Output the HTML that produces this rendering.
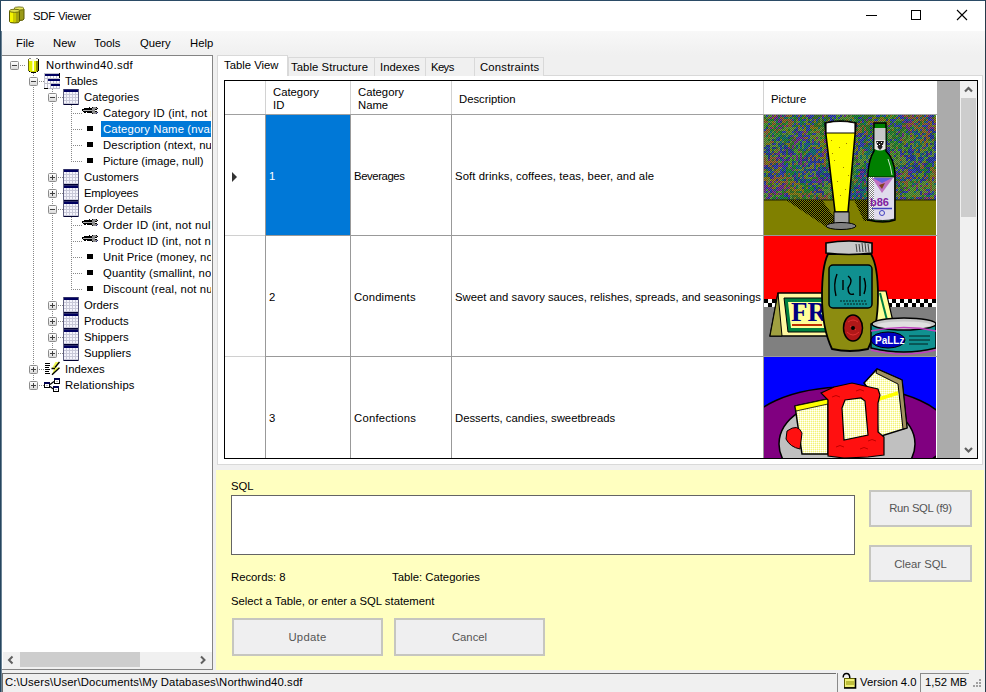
<!DOCTYPE html>
<html><head><meta charset="utf-8">
<style>
*{box-sizing:border-box;margin:0;padding:0}
html,body{width:986px;height:692px;overflow:hidden;background:#f0f0f0;font-family:"Liberation Sans",sans-serif;font-size:11.3px;color:#000}
.a{position:absolute}
.t{position:absolute;white-space:nowrap;line-height:13px}
svg{position:absolute;overflow:hidden}
</style></head><body>

<div class="a" style="left:0px;top:0px;width:986px;height:31px;background:#fff"></div>
<svg style="left:0;top:0" width="40" height="31">
<path d="M14 9 h10 v10 q0 1.5 -5 1.5 q-5 0 -5 -1.5z" fill="#9a9a18" stroke="#5a5a00" stroke-width="1"/>
<ellipse cx="19" cy="8.5" rx="5" ry="1.6" fill="#e8e860" stroke="#5a5a00" stroke-width="0.8"/>
<path d="M9.5 11 h10 v10.5 q0 1.5 -5 1.5 q-5 0 -5 -1.5z" fill="#c8c800" stroke="#5a5a00" stroke-width="1"/>
<rect x="10" y="12" width="3" height="10" fill="#f4f400"/>
<rect x="16" y="12" width="3" height="10" fill="#a0a010"/>
<ellipse cx="14.5" cy="10.8" rx="5" ry="1.6" fill="#dede50" stroke="#5a5a00" stroke-width="0.8"/>
</svg>
<div class="t" style="left:33px;top:10px;letter-spacing:-0.2px">SDF Viewer</div>
<div class="a" style="left:866px;top:15px;width:11px;height:1px;background:#000"></div>
<div class="a" style="left:911px;top:10px;width:10px;height:10px;border:1px solid #000"></div>
<svg style="left:956px;top:9px" width="12" height="12"><path d="M1 1 L11 11 M11 1 L1 11" stroke="#000" stroke-width="1.1"/></svg>
<div class="a" style="left:0px;top:31px;width:986px;height:24px;background:linear-gradient(#f8f8f8,#f0f0f0)"></div>
<div class="t" style="left:16px;top:37px;">File</div>
<div class="t" style="left:53px;top:37px;">New</div>
<div class="t" style="left:94px;top:37px;">Tools</div>
<div class="t" style="left:140px;top:37px;">Query</div>
<div class="t" style="left:190px;top:37px;">Help</div>
<div class="a" style="left:2px;top:55px;width:211px;height:615px;border:1px solid #848484;border-left:none;background:#fff"></div>
<div class="a" style="left:3px;top:56px;width:208px;height:596px;overflow:hidden">
<svg style="left:0;top:0" width="209" height="596">
<line x1="30.5" y1="17" x2="30.5" y2="330" stroke="#888" stroke-width="1" stroke-dasharray="1 1"/>
<line x1="49.5" y1="33" x2="49.5" y2="298" stroke="#888" stroke-width="1" stroke-dasharray="1 1"/>
<line x1="68.5" y1="49" x2="68.5" y2="106" stroke="#888" stroke-width="1" stroke-dasharray="1 1"/>
<line x1="68.5" y1="145" x2="68.5" y2="234" stroke="#888" stroke-width="1" stroke-dasharray="1 1"/>
<line x1="17" y1="9.5" x2="23" y2="9.5" stroke="#888" stroke-width="1" stroke-dasharray="1 1"/>
<line x1="36" y1="25.5" x2="42" y2="25.5" stroke="#888" stroke-width="1" stroke-dasharray="1 1"/>
<line x1="55" y1="41.5" x2="61" y2="41.5" stroke="#888" stroke-width="1" stroke-dasharray="1 1"/>
<line x1="70" y1="57.5" x2="80" y2="57.5" stroke="#888" stroke-width="1" stroke-dasharray="1 1"/>
<line x1="70" y1="73.5" x2="80" y2="73.5" stroke="#888" stroke-width="1" stroke-dasharray="1 1"/>
<line x1="70" y1="89.5" x2="80" y2="89.5" stroke="#888" stroke-width="1" stroke-dasharray="1 1"/>
<line x1="70" y1="105.5" x2="80" y2="105.5" stroke="#888" stroke-width="1" stroke-dasharray="1 1"/>
<line x1="55" y1="121.5" x2="61" y2="121.5" stroke="#888" stroke-width="1" stroke-dasharray="1 1"/>
<line x1="55" y1="137.5" x2="61" y2="137.5" stroke="#888" stroke-width="1" stroke-dasharray="1 1"/>
<line x1="55" y1="153.5" x2="61" y2="153.5" stroke="#888" stroke-width="1" stroke-dasharray="1 1"/>
<line x1="70" y1="169.5" x2="80" y2="169.5" stroke="#888" stroke-width="1" stroke-dasharray="1 1"/>
<line x1="70" y1="185.5" x2="80" y2="185.5" stroke="#888" stroke-width="1" stroke-dasharray="1 1"/>
<line x1="70" y1="201.5" x2="80" y2="201.5" stroke="#888" stroke-width="1" stroke-dasharray="1 1"/>
<line x1="70" y1="217.5" x2="80" y2="217.5" stroke="#888" stroke-width="1" stroke-dasharray="1 1"/>
<line x1="70" y1="233.5" x2="80" y2="233.5" stroke="#888" stroke-width="1" stroke-dasharray="1 1"/>
<line x1="55" y1="249.5" x2="61" y2="249.5" stroke="#888" stroke-width="1" stroke-dasharray="1 1"/>
<line x1="55" y1="265.5" x2="61" y2="265.5" stroke="#888" stroke-width="1" stroke-dasharray="1 1"/>
<line x1="55" y1="281.5" x2="61" y2="281.5" stroke="#888" stroke-width="1" stroke-dasharray="1 1"/>
<line x1="55" y1="297.5" x2="61" y2="297.5" stroke="#888" stroke-width="1" stroke-dasharray="1 1"/>
<line x1="36" y1="313.5" x2="42" y2="313.5" stroke="#888" stroke-width="1" stroke-dasharray="1 1"/>
<line x1="36" y1="329.5" x2="42" y2="329.5" stroke="#888" stroke-width="1" stroke-dasharray="1 1"/>
</svg>
<svg width="0" height="0"><defs><linearGradient id="eg" x1="0" y1="0" x2="0" y2="1"><stop offset="0" stop-color="#ffffff"/><stop offset="1" stop-color="#d8d8d8"/></linearGradient></defs></svg>
<svg style="left:7px;top:5px" width="9" height="9"><rect x="0.5" y="0.5" width="8" height="8" rx="1" fill="url(#eg)" stroke="#8c8c8c"/><rect x="2" y="4" width="5" height="1" fill="#404040"/></svg>
<svg style="left:25px;top:2px" width="11" height="15" shape-rendering="crispEdges"><rect x="1" y="0" width="2" height="1" fill="#8a8a8a"/><rect x="8" y="0" width="2" height="1" fill="#8a8a8a"/><rect x="1" y="1" width="9" height="2" fill="#fbfbe8"/><rect x="0" y="1" width="1" height="12" fill="#707010"/><rect x="10" y="1" width="1" height="12" fill="#000"/><rect x="1" y="3" width="3" height="10" fill="#e4f000"/><rect x="4" y="3" width="1" height="10" fill="#f8ff90"/><rect x="5" y="3" width="1" height="10" fill="#ffffe0"/><rect x="6" y="3" width="2" height="10" fill="#e8f000"/><rect x="8" y="3" width="2" height="10" fill="#8c8c00"/><rect x="1" y="13" width="1" height="1" fill="#000"/><rect x="9" y="13" width="1" height="1" fill="#000"/><rect x="2" y="13" width="7" height="1" fill="#c8d000"/><rect x="3" y="14" width="5" height="1" fill="#000"/></svg>
<div class="t" style="left:43px;top:3px;letter-spacing:0.36px">Northwind40.sdf</div>
<svg style="left:26px;top:21px" width="9" height="9"><rect x="0.5" y="0.5" width="8" height="8" rx="1" fill="url(#eg)" stroke="#8c8c8c"/><rect x="2" y="4" width="5" height="1" fill="#404040"/></svg>
<svg style="left:41px;top:17px" width="16" height="16" shape-rendering="crispEdges"><rect x="0" y="0" width="16" height="16" fill="#c0c0cc"/><rect x="1" y="1" width="15" height="2" fill="#000060"/><rect x="15" y="0" width="1" height="5" fill="#000"/><rect x="1" y="3" width="2" height="2" fill="#fafaff"/><rect x="4" y="3" width="2" height="2" fill="#fafaff"/><rect x="7" y="3" width="2" height="2" fill="#fafaff"/><rect x="10" y="3" width="2" height="2" fill="#fafaff"/><rect x="13" y="3" width="2" height="2" fill="#fafaff"/><rect x="1" y="8" width="2" height="2" fill="#fafaff"/><rect x="4" y="8" width="2" height="2" fill="#fafaff"/><rect x="7" y="8" width="2" height="2" fill="#fafaff"/><rect x="10" y="8" width="2" height="2" fill="#fafaff"/><rect x="13" y="8" width="2" height="2" fill="#fafaff"/><rect x="1" y="13" width="2" height="2" fill="#fafaff"/><rect x="4" y="13" width="2" height="2" fill="#fafaff"/><rect x="7" y="13" width="2" height="2" fill="#fafaff"/><rect x="10" y="13" width="2" height="2" fill="#fafaff"/><rect x="13" y="13" width="2" height="2" fill="#fafaff"/><rect x="4" y="6" width="12" height="2" fill="#000060"/><rect x="1" y="6" width="2" height="2" fill="#fafaff"/><rect x="7" y="11" width="9" height="2" fill="#000060"/><rect x="1" y="11" width="2" height="2" fill="#fafaff"/><rect x="4" y="11" width="2" height="2" fill="#fafaff"/><rect x="0" y="15" width="4" height="1" fill="#000"/></svg>
<div class="t" style="left:62px;top:19px;letter-spacing:0px">Tables</div>
<svg style="left:45px;top:37px" width="9" height="9"><rect x="0.5" y="0.5" width="8" height="8" rx="1" fill="url(#eg)" stroke="#8c8c8c"/><rect x="2" y="4" width="5" height="1" fill="#404040"/></svg>
<svg style="left:60px;top:33px" width="16" height="16" shape-rendering="crispEdges"><rect x="0" y="0" width="16" height="16" fill="#c8c8d8"/><rect x="0" y="0" width="16" height="1" fill="#30306a"/><rect x="0" y="1" width="16" height="2" fill="#000060"/><rect x="1" y="3" width="2" height="2" fill="#f4f4fc"/><rect x="4" y="3" width="2" height="2" fill="#f4f4fc"/><rect x="7" y="3" width="2" height="2" fill="#f4f4fc"/><rect x="10" y="3" width="2" height="2" fill="#f4f4fc"/><rect x="13" y="3" width="2" height="2" fill="#f4f4fc"/><rect x="1" y="6" width="2" height="2" fill="#f4f4fc"/><rect x="4" y="6" width="2" height="2" fill="#f4f4fc"/><rect x="7" y="6" width="2" height="2" fill="#f4f4fc"/><rect x="10" y="6" width="2" height="2" fill="#f4f4fc"/><rect x="13" y="6" width="2" height="2" fill="#f4f4fc"/><rect x="1" y="9" width="2" height="2" fill="#f4f4fc"/><rect x="4" y="9" width="2" height="2" fill="#f4f4fc"/><rect x="7" y="9" width="2" height="2" fill="#f4f4fc"/><rect x="10" y="9" width="2" height="2" fill="#f4f4fc"/><rect x="13" y="9" width="2" height="2" fill="#f4f4fc"/><rect x="1" y="12" width="2" height="2" fill="#f4f4fc"/><rect x="4" y="12" width="2" height="2" fill="#f4f4fc"/><rect x="7" y="12" width="2" height="2" fill="#f4f4fc"/><rect x="10" y="12" width="2" height="2" fill="#f4f4fc"/><rect x="13" y="12" width="2" height="2" fill="#f4f4fc"/><rect x="0" y="15" width="16" height="1" fill="#000030"/><rect x="0" y="0" width="1" height="16" fill="#606080"/><rect x="15" y="0" width="1" height="16" fill="#606080"/></svg>
<div class="t" style="left:81px;top:35px;letter-spacing:0.05px">Categories</div>
<svg style="left:79px;top:51px" width="16" height="7" shape-rendering="crispEdges"><rect x="2" y="1" width="8" height="1" fill="#000"/><rect x="7" y="0" width="1" height="1" fill="#000"/><rect x="0" y="2" width="1" height="1" fill="#000"/><rect x="1" y="2" width="9" height="1" fill="#000"/><rect x="1" y="3" width="9" height="1" fill="#b0b0b0"/><rect x="0" y="3" width="1" height="1" fill="#000"/><rect x="1" y="4" width="9" height="1" fill="#000"/><rect x="2" y="5" width="2" height="1" fill="#000"/><rect x="5" y="5" width="4" height="1" fill="#000"/><rect x="10" y="1" width="5" height="5" fill="#8c8c8c"/><rect x="11" y="0" width="3" height="1" fill="#8c8c8c"/><rect x="11" y="6" width="3" height="1" fill="#8c8c8c"/><rect x="10" y="0" width="1" height="1" fill="#000"/><rect x="14" y="0" width="1" height="1" fill="#000"/><rect x="9" y="1" width="1" height="1" fill="#000"/><rect x="15" y="1" width="1" height="1" fill="#000"/><rect x="9" y="5" width="1" height="1" fill="#000"/><rect x="15" y="5" width="1" height="1" fill="#202060"/><rect x="10" y="6" width="1" height="1" fill="#000"/><rect x="14" y="6" width="1" height="1" fill="#202060"/><rect x="13" y="2" width="2" height="1" fill="#000"/><rect x="13" y="3" width="3" height="1" fill="#fff"/><rect x="13" y="4" width="2" height="1" fill="#000"/></svg>
<div class="t" style="left:100px;top:51px;letter-spacing:0.15px">Category ID (int, not null)</div>
<div class="a" style="left:84px;top:70px;width:6px;height:5px;background:#000"></div>
<div class="a" style="left:98px;top:65px;width:115px;height:16px;background:#0078d7"></div>
<div class="t" style="left:100px;top:67px;color:#fff;letter-spacing:0.15px">Category Name (nvarchar(15), not null)</div>
<div class="a" style="left:84px;top:86px;width:6px;height:5px;background:#000"></div>
<div class="t" style="left:100px;top:83px;letter-spacing:0.1px">Description (ntext, null)</div>
<div class="a" style="left:84px;top:102px;width:6px;height:5px;background:#000"></div>
<div class="t" style="left:100px;top:99px;letter-spacing:0px">Picture (image, null)</div>
<svg style="left:45px;top:117px" width="9" height="9"><rect x="0.5" y="0.5" width="8" height="8" rx="1" fill="url(#eg)" stroke="#8c8c8c"/><rect x="2" y="4" width="5" height="1" fill="#404040"/><rect x="4" y="2" width="1" height="5" fill="#404040"/></svg>
<svg style="left:60px;top:113px" width="16" height="16" shape-rendering="crispEdges"><rect x="0" y="0" width="16" height="16" fill="#c8c8d8"/><rect x="0" y="0" width="16" height="1" fill="#30306a"/><rect x="0" y="1" width="16" height="2" fill="#000060"/><rect x="1" y="3" width="2" height="2" fill="#f4f4fc"/><rect x="4" y="3" width="2" height="2" fill="#f4f4fc"/><rect x="7" y="3" width="2" height="2" fill="#f4f4fc"/><rect x="10" y="3" width="2" height="2" fill="#f4f4fc"/><rect x="13" y="3" width="2" height="2" fill="#f4f4fc"/><rect x="1" y="6" width="2" height="2" fill="#f4f4fc"/><rect x="4" y="6" width="2" height="2" fill="#f4f4fc"/><rect x="7" y="6" width="2" height="2" fill="#f4f4fc"/><rect x="10" y="6" width="2" height="2" fill="#f4f4fc"/><rect x="13" y="6" width="2" height="2" fill="#f4f4fc"/><rect x="1" y="9" width="2" height="2" fill="#f4f4fc"/><rect x="4" y="9" width="2" height="2" fill="#f4f4fc"/><rect x="7" y="9" width="2" height="2" fill="#f4f4fc"/><rect x="10" y="9" width="2" height="2" fill="#f4f4fc"/><rect x="13" y="9" width="2" height="2" fill="#f4f4fc"/><rect x="1" y="12" width="2" height="2" fill="#f4f4fc"/><rect x="4" y="12" width="2" height="2" fill="#f4f4fc"/><rect x="7" y="12" width="2" height="2" fill="#f4f4fc"/><rect x="10" y="12" width="2" height="2" fill="#f4f4fc"/><rect x="13" y="12" width="2" height="2" fill="#f4f4fc"/><rect x="0" y="15" width="16" height="1" fill="#000030"/><rect x="0" y="0" width="1" height="16" fill="#606080"/><rect x="15" y="0" width="1" height="16" fill="#606080"/></svg>
<div class="t" style="left:81px;top:115px;letter-spacing:0px">Customers</div>
<svg style="left:45px;top:133px" width="9" height="9"><rect x="0.5" y="0.5" width="8" height="8" rx="1" fill="url(#eg)" stroke="#8c8c8c"/><rect x="2" y="4" width="5" height="1" fill="#404040"/><rect x="4" y="2" width="1" height="5" fill="#404040"/></svg>
<svg style="left:60px;top:129px" width="16" height="16" shape-rendering="crispEdges"><rect x="0" y="0" width="16" height="16" fill="#c8c8d8"/><rect x="0" y="0" width="16" height="1" fill="#30306a"/><rect x="0" y="1" width="16" height="2" fill="#000060"/><rect x="1" y="3" width="2" height="2" fill="#f4f4fc"/><rect x="4" y="3" width="2" height="2" fill="#f4f4fc"/><rect x="7" y="3" width="2" height="2" fill="#f4f4fc"/><rect x="10" y="3" width="2" height="2" fill="#f4f4fc"/><rect x="13" y="3" width="2" height="2" fill="#f4f4fc"/><rect x="1" y="6" width="2" height="2" fill="#f4f4fc"/><rect x="4" y="6" width="2" height="2" fill="#f4f4fc"/><rect x="7" y="6" width="2" height="2" fill="#f4f4fc"/><rect x="10" y="6" width="2" height="2" fill="#f4f4fc"/><rect x="13" y="6" width="2" height="2" fill="#f4f4fc"/><rect x="1" y="9" width="2" height="2" fill="#f4f4fc"/><rect x="4" y="9" width="2" height="2" fill="#f4f4fc"/><rect x="7" y="9" width="2" height="2" fill="#f4f4fc"/><rect x="10" y="9" width="2" height="2" fill="#f4f4fc"/><rect x="13" y="9" width="2" height="2" fill="#f4f4fc"/><rect x="1" y="12" width="2" height="2" fill="#f4f4fc"/><rect x="4" y="12" width="2" height="2" fill="#f4f4fc"/><rect x="7" y="12" width="2" height="2" fill="#f4f4fc"/><rect x="10" y="12" width="2" height="2" fill="#f4f4fc"/><rect x="13" y="12" width="2" height="2" fill="#f4f4fc"/><rect x="0" y="15" width="16" height="1" fill="#000030"/><rect x="0" y="0" width="1" height="16" fill="#606080"/><rect x="15" y="0" width="1" height="16" fill="#606080"/></svg>
<div class="t" style="left:81px;top:131px;letter-spacing:-0.2px">Employees</div>
<svg style="left:45px;top:149px" width="9" height="9"><rect x="0.5" y="0.5" width="8" height="8" rx="1" fill="url(#eg)" stroke="#8c8c8c"/><rect x="2" y="4" width="5" height="1" fill="#404040"/></svg>
<svg style="left:60px;top:145px" width="16" height="16" shape-rendering="crispEdges"><rect x="0" y="0" width="16" height="16" fill="#c8c8d8"/><rect x="0" y="0" width="16" height="1" fill="#30306a"/><rect x="0" y="1" width="16" height="2" fill="#000060"/><rect x="1" y="3" width="2" height="2" fill="#f4f4fc"/><rect x="4" y="3" width="2" height="2" fill="#f4f4fc"/><rect x="7" y="3" width="2" height="2" fill="#f4f4fc"/><rect x="10" y="3" width="2" height="2" fill="#f4f4fc"/><rect x="13" y="3" width="2" height="2" fill="#f4f4fc"/><rect x="1" y="6" width="2" height="2" fill="#f4f4fc"/><rect x="4" y="6" width="2" height="2" fill="#f4f4fc"/><rect x="7" y="6" width="2" height="2" fill="#f4f4fc"/><rect x="10" y="6" width="2" height="2" fill="#f4f4fc"/><rect x="13" y="6" width="2" height="2" fill="#f4f4fc"/><rect x="1" y="9" width="2" height="2" fill="#f4f4fc"/><rect x="4" y="9" width="2" height="2" fill="#f4f4fc"/><rect x="7" y="9" width="2" height="2" fill="#f4f4fc"/><rect x="10" y="9" width="2" height="2" fill="#f4f4fc"/><rect x="13" y="9" width="2" height="2" fill="#f4f4fc"/><rect x="1" y="12" width="2" height="2" fill="#f4f4fc"/><rect x="4" y="12" width="2" height="2" fill="#f4f4fc"/><rect x="7" y="12" width="2" height="2" fill="#f4f4fc"/><rect x="10" y="12" width="2" height="2" fill="#f4f4fc"/><rect x="13" y="12" width="2" height="2" fill="#f4f4fc"/><rect x="0" y="15" width="16" height="1" fill="#000030"/><rect x="0" y="0" width="1" height="16" fill="#606080"/><rect x="15" y="0" width="1" height="16" fill="#606080"/></svg>
<div class="t" style="left:81px;top:147px;letter-spacing:0.12px">Order Details</div>
<svg style="left:79px;top:163px" width="16" height="7" shape-rendering="crispEdges"><rect x="2" y="1" width="8" height="1" fill="#000"/><rect x="7" y="0" width="1" height="1" fill="#000"/><rect x="0" y="2" width="1" height="1" fill="#000"/><rect x="1" y="2" width="9" height="1" fill="#000"/><rect x="1" y="3" width="9" height="1" fill="#b0b0b0"/><rect x="0" y="3" width="1" height="1" fill="#000"/><rect x="1" y="4" width="9" height="1" fill="#000"/><rect x="2" y="5" width="2" height="1" fill="#000"/><rect x="5" y="5" width="4" height="1" fill="#000"/><rect x="10" y="1" width="5" height="5" fill="#8c8c8c"/><rect x="11" y="0" width="3" height="1" fill="#8c8c8c"/><rect x="11" y="6" width="3" height="1" fill="#8c8c8c"/><rect x="10" y="0" width="1" height="1" fill="#000"/><rect x="14" y="0" width="1" height="1" fill="#000"/><rect x="9" y="1" width="1" height="1" fill="#000"/><rect x="15" y="1" width="1" height="1" fill="#000"/><rect x="9" y="5" width="1" height="1" fill="#000"/><rect x="15" y="5" width="1" height="1" fill="#202060"/><rect x="10" y="6" width="1" height="1" fill="#000"/><rect x="14" y="6" width="1" height="1" fill="#202060"/><rect x="13" y="2" width="2" height="1" fill="#000"/><rect x="13" y="3" width="3" height="1" fill="#fff"/><rect x="13" y="4" width="2" height="1" fill="#000"/></svg>
<div class="t" style="left:100px;top:163px;letter-spacing:0.25px">Order ID (int, not null)</div>
<svg style="left:79px;top:179px" width="16" height="7" shape-rendering="crispEdges"><rect x="2" y="1" width="8" height="1" fill="#000"/><rect x="7" y="0" width="1" height="1" fill="#000"/><rect x="0" y="2" width="1" height="1" fill="#000"/><rect x="1" y="2" width="9" height="1" fill="#000"/><rect x="1" y="3" width="9" height="1" fill="#b0b0b0"/><rect x="0" y="3" width="1" height="1" fill="#000"/><rect x="1" y="4" width="9" height="1" fill="#000"/><rect x="2" y="5" width="2" height="1" fill="#000"/><rect x="5" y="5" width="4" height="1" fill="#000"/><rect x="10" y="1" width="5" height="5" fill="#8c8c8c"/><rect x="11" y="0" width="3" height="1" fill="#8c8c8c"/><rect x="11" y="6" width="3" height="1" fill="#8c8c8c"/><rect x="10" y="0" width="1" height="1" fill="#000"/><rect x="14" y="0" width="1" height="1" fill="#000"/><rect x="9" y="1" width="1" height="1" fill="#000"/><rect x="15" y="1" width="1" height="1" fill="#000"/><rect x="9" y="5" width="1" height="1" fill="#000"/><rect x="15" y="5" width="1" height="1" fill="#202060"/><rect x="10" y="6" width="1" height="1" fill="#000"/><rect x="14" y="6" width="1" height="1" fill="#202060"/><rect x="13" y="2" width="2" height="1" fill="#000"/><rect x="13" y="3" width="3" height="1" fill="#fff"/><rect x="13" y="4" width="2" height="1" fill="#000"/></svg>
<div class="t" style="left:100px;top:179px;letter-spacing:0.2px">Product ID (int, not null)</div>
<div class="a" style="left:84px;top:198px;width:6px;height:5px;background:#000"></div>
<div class="t" style="left:100px;top:195px;letter-spacing:0.1px">Unit Price (money, not null)</div>
<div class="a" style="left:84px;top:214px;width:6px;height:5px;background:#000"></div>
<div class="t" style="left:100px;top:211px;letter-spacing:0.1px">Quantity (smallint, not null)</div>
<div class="a" style="left:84px;top:230px;width:6px;height:5px;background:#000"></div>
<div class="t" style="left:100px;top:227px;letter-spacing:0.1px">Discount (real, not null)</div>
<svg style="left:45px;top:245px" width="9" height="9"><rect x="0.5" y="0.5" width="8" height="8" rx="1" fill="url(#eg)" stroke="#8c8c8c"/><rect x="2" y="4" width="5" height="1" fill="#404040"/><rect x="4" y="2" width="1" height="5" fill="#404040"/></svg>
<svg style="left:60px;top:241px" width="16" height="16" shape-rendering="crispEdges"><rect x="0" y="0" width="16" height="16" fill="#c8c8d8"/><rect x="0" y="0" width="16" height="1" fill="#30306a"/><rect x="0" y="1" width="16" height="2" fill="#000060"/><rect x="1" y="3" width="2" height="2" fill="#f4f4fc"/><rect x="4" y="3" width="2" height="2" fill="#f4f4fc"/><rect x="7" y="3" width="2" height="2" fill="#f4f4fc"/><rect x="10" y="3" width="2" height="2" fill="#f4f4fc"/><rect x="13" y="3" width="2" height="2" fill="#f4f4fc"/><rect x="1" y="6" width="2" height="2" fill="#f4f4fc"/><rect x="4" y="6" width="2" height="2" fill="#f4f4fc"/><rect x="7" y="6" width="2" height="2" fill="#f4f4fc"/><rect x="10" y="6" width="2" height="2" fill="#f4f4fc"/><rect x="13" y="6" width="2" height="2" fill="#f4f4fc"/><rect x="1" y="9" width="2" height="2" fill="#f4f4fc"/><rect x="4" y="9" width="2" height="2" fill="#f4f4fc"/><rect x="7" y="9" width="2" height="2" fill="#f4f4fc"/><rect x="10" y="9" width="2" height="2" fill="#f4f4fc"/><rect x="13" y="9" width="2" height="2" fill="#f4f4fc"/><rect x="1" y="12" width="2" height="2" fill="#f4f4fc"/><rect x="4" y="12" width="2" height="2" fill="#f4f4fc"/><rect x="7" y="12" width="2" height="2" fill="#f4f4fc"/><rect x="10" y="12" width="2" height="2" fill="#f4f4fc"/><rect x="13" y="12" width="2" height="2" fill="#f4f4fc"/><rect x="0" y="15" width="16" height="1" fill="#000030"/><rect x="0" y="0" width="1" height="16" fill="#606080"/><rect x="15" y="0" width="1" height="16" fill="#606080"/></svg>
<div class="t" style="left:81px;top:243px;letter-spacing:0px">Orders</div>
<svg style="left:45px;top:261px" width="9" height="9"><rect x="0.5" y="0.5" width="8" height="8" rx="1" fill="url(#eg)" stroke="#8c8c8c"/><rect x="2" y="4" width="5" height="1" fill="#404040"/><rect x="4" y="2" width="1" height="5" fill="#404040"/></svg>
<svg style="left:60px;top:257px" width="16" height="16" shape-rendering="crispEdges"><rect x="0" y="0" width="16" height="16" fill="#c8c8d8"/><rect x="0" y="0" width="16" height="1" fill="#30306a"/><rect x="0" y="1" width="16" height="2" fill="#000060"/><rect x="1" y="3" width="2" height="2" fill="#f4f4fc"/><rect x="4" y="3" width="2" height="2" fill="#f4f4fc"/><rect x="7" y="3" width="2" height="2" fill="#f4f4fc"/><rect x="10" y="3" width="2" height="2" fill="#f4f4fc"/><rect x="13" y="3" width="2" height="2" fill="#f4f4fc"/><rect x="1" y="6" width="2" height="2" fill="#f4f4fc"/><rect x="4" y="6" width="2" height="2" fill="#f4f4fc"/><rect x="7" y="6" width="2" height="2" fill="#f4f4fc"/><rect x="10" y="6" width="2" height="2" fill="#f4f4fc"/><rect x="13" y="6" width="2" height="2" fill="#f4f4fc"/><rect x="1" y="9" width="2" height="2" fill="#f4f4fc"/><rect x="4" y="9" width="2" height="2" fill="#f4f4fc"/><rect x="7" y="9" width="2" height="2" fill="#f4f4fc"/><rect x="10" y="9" width="2" height="2" fill="#f4f4fc"/><rect x="13" y="9" width="2" height="2" fill="#f4f4fc"/><rect x="1" y="12" width="2" height="2" fill="#f4f4fc"/><rect x="4" y="12" width="2" height="2" fill="#f4f4fc"/><rect x="7" y="12" width="2" height="2" fill="#f4f4fc"/><rect x="10" y="12" width="2" height="2" fill="#f4f4fc"/><rect x="13" y="12" width="2" height="2" fill="#f4f4fc"/><rect x="0" y="15" width="16" height="1" fill="#000030"/><rect x="0" y="0" width="1" height="16" fill="#606080"/><rect x="15" y="0" width="1" height="16" fill="#606080"/></svg>
<div class="t" style="left:81px;top:259px;letter-spacing:0px">Products</div>
<svg style="left:45px;top:277px" width="9" height="9"><rect x="0.5" y="0.5" width="8" height="8" rx="1" fill="url(#eg)" stroke="#8c8c8c"/><rect x="2" y="4" width="5" height="1" fill="#404040"/><rect x="4" y="2" width="1" height="5" fill="#404040"/></svg>
<svg style="left:60px;top:273px" width="16" height="16" shape-rendering="crispEdges"><rect x="0" y="0" width="16" height="16" fill="#c8c8d8"/><rect x="0" y="0" width="16" height="1" fill="#30306a"/><rect x="0" y="1" width="16" height="2" fill="#000060"/><rect x="1" y="3" width="2" height="2" fill="#f4f4fc"/><rect x="4" y="3" width="2" height="2" fill="#f4f4fc"/><rect x="7" y="3" width="2" height="2" fill="#f4f4fc"/><rect x="10" y="3" width="2" height="2" fill="#f4f4fc"/><rect x="13" y="3" width="2" height="2" fill="#f4f4fc"/><rect x="1" y="6" width="2" height="2" fill="#f4f4fc"/><rect x="4" y="6" width="2" height="2" fill="#f4f4fc"/><rect x="7" y="6" width="2" height="2" fill="#f4f4fc"/><rect x="10" y="6" width="2" height="2" fill="#f4f4fc"/><rect x="13" y="6" width="2" height="2" fill="#f4f4fc"/><rect x="1" y="9" width="2" height="2" fill="#f4f4fc"/><rect x="4" y="9" width="2" height="2" fill="#f4f4fc"/><rect x="7" y="9" width="2" height="2" fill="#f4f4fc"/><rect x="10" y="9" width="2" height="2" fill="#f4f4fc"/><rect x="13" y="9" width="2" height="2" fill="#f4f4fc"/><rect x="1" y="12" width="2" height="2" fill="#f4f4fc"/><rect x="4" y="12" width="2" height="2" fill="#f4f4fc"/><rect x="7" y="12" width="2" height="2" fill="#f4f4fc"/><rect x="10" y="12" width="2" height="2" fill="#f4f4fc"/><rect x="13" y="12" width="2" height="2" fill="#f4f4fc"/><rect x="0" y="15" width="16" height="1" fill="#000030"/><rect x="0" y="0" width="1" height="16" fill="#606080"/><rect x="15" y="0" width="1" height="16" fill="#606080"/></svg>
<div class="t" style="left:81px;top:275px;letter-spacing:0px">Shippers</div>
<svg style="left:45px;top:293px" width="9" height="9"><rect x="0.5" y="0.5" width="8" height="8" rx="1" fill="url(#eg)" stroke="#8c8c8c"/><rect x="2" y="4" width="5" height="1" fill="#404040"/><rect x="4" y="2" width="1" height="5" fill="#404040"/></svg>
<svg style="left:60px;top:289px" width="16" height="16" shape-rendering="crispEdges"><rect x="0" y="0" width="16" height="16" fill="#c8c8d8"/><rect x="0" y="0" width="16" height="1" fill="#30306a"/><rect x="0" y="1" width="16" height="2" fill="#000060"/><rect x="1" y="3" width="2" height="2" fill="#f4f4fc"/><rect x="4" y="3" width="2" height="2" fill="#f4f4fc"/><rect x="7" y="3" width="2" height="2" fill="#f4f4fc"/><rect x="10" y="3" width="2" height="2" fill="#f4f4fc"/><rect x="13" y="3" width="2" height="2" fill="#f4f4fc"/><rect x="1" y="6" width="2" height="2" fill="#f4f4fc"/><rect x="4" y="6" width="2" height="2" fill="#f4f4fc"/><rect x="7" y="6" width="2" height="2" fill="#f4f4fc"/><rect x="10" y="6" width="2" height="2" fill="#f4f4fc"/><rect x="13" y="6" width="2" height="2" fill="#f4f4fc"/><rect x="1" y="9" width="2" height="2" fill="#f4f4fc"/><rect x="4" y="9" width="2" height="2" fill="#f4f4fc"/><rect x="7" y="9" width="2" height="2" fill="#f4f4fc"/><rect x="10" y="9" width="2" height="2" fill="#f4f4fc"/><rect x="13" y="9" width="2" height="2" fill="#f4f4fc"/><rect x="1" y="12" width="2" height="2" fill="#f4f4fc"/><rect x="4" y="12" width="2" height="2" fill="#f4f4fc"/><rect x="7" y="12" width="2" height="2" fill="#f4f4fc"/><rect x="10" y="12" width="2" height="2" fill="#f4f4fc"/><rect x="13" y="12" width="2" height="2" fill="#f4f4fc"/><rect x="0" y="15" width="16" height="1" fill="#000030"/><rect x="0" y="0" width="1" height="16" fill="#606080"/><rect x="15" y="0" width="1" height="16" fill="#606080"/></svg>
<div class="t" style="left:81px;top:291px;letter-spacing:0px">Suppliers</div>
<svg style="left:26px;top:309px" width="9" height="9"><rect x="0.5" y="0.5" width="8" height="8" rx="1" fill="url(#eg)" stroke="#8c8c8c"/><rect x="2" y="4" width="5" height="1" fill="#404040"/><rect x="4" y="2" width="1" height="5" fill="#404040"/></svg>
<svg style="left:41px;top:305px" width="16" height="15" shape-rendering="crispEdges"><rect x="1" y="2" width="5" height="1" fill="#000"/><rect x="1" y="4" width="5" height="1" fill="#000"/><rect x="1" y="6" width="4" height="1" fill="#000"/><rect x="1" y="8" width="5" height="1" fill="#000"/><rect x="1" y="10" width="4" height="1" fill="#000"/><rect x="1" y="12" width="5" height="1" fill="#000"/><path d="M11.5 1 L15.5 1 L11 6.5 L15.5 6.5 L8 13.5 L10 8 L7.5 8z" fill="#f0f850" shape-rendering="auto"/><path d="M15.5 1 L11 6.5 M15.5 6.8 L8 13.8 M7.5 7.5 H11" stroke="#000" stroke-width="1.4" fill="none" shape-rendering="auto"/></svg>
<div class="t" style="left:62px;top:307px;letter-spacing:0px">Indexes</div>
<svg style="left:26px;top:325px" width="9" height="9"><rect x="0.5" y="0.5" width="8" height="8" rx="1" fill="url(#eg)" stroke="#8c8c8c"/><rect x="2" y="4" width="5" height="1" fill="#404040"/><rect x="4" y="2" width="1" height="5" fill="#404040"/></svg>
<svg style="left:41px;top:322px" width="16" height="14" shape-rendering="crispEdges"><rect x="0" y="4" width="6" height="6" fill="#000"/><rect x="0" y="4" width="6" height="2" fill="#000050"/><rect x="1" y="6" width="4" height="3" fill="#fff"/><rect x="2" y="7" width="2" height="1" fill="#b0b0b8"/><rect x="10" y="0" width="6" height="6" fill="#000"/><rect x="10" y="0" width="6" height="2" fill="#000050"/><rect x="11" y="2" width="4" height="3" fill="#fff"/><rect x="12" y="3" width="2" height="1" fill="#b0b0b8"/><rect x="9" y="8" width="6" height="6" fill="#000"/><rect x="9" y="8" width="6" height="2" fill="#000050"/><rect x="10" y="10" width="4" height="3" fill="#fff"/><rect x="11" y="11" width="2" height="1" fill="#b0b0b8"/><path d="M6 6.5 L8 5 L10 3.5 M6 8.5 L8 10 L9.5 11" stroke="#000" stroke-width="1.3" fill="none" shape-rendering="auto"/></svg>
<div class="t" style="left:62px;top:323px;letter-spacing:0.14px">Relationships</div>
</div>
<div class="a" style="left:3px;top:652px;width:209px;height:17px;background:#f0f0f0"></div>
<div class="a" style="left:20px;top:652px;width:120px;height:15px;background:#cdcdcd"></div>
<svg style="left:6px;top:655px" width="10" height="10"><path d="M6.5 1.5 L3 5 L6.5 8.5" fill="none" stroke="#606060" stroke-width="2"/></svg>
<svg style="left:198px;top:655px" width="10" height="10"><path d="M3 1.5 L6.5 5 L3 8.5" fill="none" stroke="#606060" stroke-width="2"/></svg>
<div class="a" style="left:217px;top:75px;width:766px;height:390px;border:1px solid #d9d9d9;background:#fff"></div>
<div class="a" style="left:288px;top:57px;width:87px;height:19px;border:1px solid #d9d9d9;border-bottom:none;background:#f0f0f0"></div>
<div class="t" style="left:291px;top:61px;letter-spacing:0.07px">Table Structure</div>
<div class="a" style="left:374px;top:57px;width:52px;height:19px;border:1px solid #d9d9d9;border-bottom:none;background:#f0f0f0"></div>
<div class="t" style="left:380px;top:61px;letter-spacing:0px">Indexes</div>
<div class="a" style="left:425px;top:57px;width:50px;height:19px;border:1px solid #d9d9d9;border-bottom:none;background:#f0f0f0"></div>
<div class="t" style="left:431px;top:61px;letter-spacing:-0.6px">Keys</div>
<div class="a" style="left:474px;top:57px;width:70px;height:19px;border:1px solid #d9d9d9;border-bottom:none;background:#f0f0f0"></div>
<div class="t" style="left:480px;top:61px;letter-spacing:0.2px">Constraints</div>
<div class="a" style="left:217px;top:55px;width:71px;height:21px;border:1px solid #d9d9d9;border-bottom:none;background:#fff"></div>
<div class="t" style="left:224px;top:59px;">Table View</div>
<div class="a" style="left:224px;top:80px;width:754px;height:379px;border:1px solid #000;background:#ababab"></div>
<div class="a" style="left:225px;top:81px;width:752px;height:377px;overflow:hidden">
<div class="a" style="left:0px;top:0px;width:712px;height:33px;background:#fff"></div>
<div class="a" style="left:0px;top:33px;width:712px;height:1px;background:#a0a0a0"></div>
<div class="a" style="left:40px;top:0px;width:1px;height:33px;background:#d2d2d2"></div>
<div class="a" style="left:125px;top:0px;width:1px;height:33px;background:#d2d2d2"></div>
<div class="a" style="left:226px;top:0px;width:1px;height:33px;background:#d2d2d2"></div>
<div class="a" style="left:538px;top:0px;width:1px;height:33px;background:#d2d2d2"></div>
<div class="t" style="left:48px;top:5px;">Category</div>
<div class="t" style="left:48px;top:18px;">ID</div>
<div class="t" style="left:133px;top:5px;">Category</div>
<div class="t" style="left:133px;top:18px;">Name</div>
<div class="t" style="left:234px;top:12px;">Description</div>
<div class="t" style="left:546px;top:12px;">Picture</div>
<div class="a" style="left:0px;top:34px;width:712px;height:120px;background:#fff"></div>
<div class="a" style="left:0px;top:154px;width:40px;height:1px;background:#d0d0d0"></div>
<div class="a" style="left:40px;top:154px;width:672px;height:1px;background:#999"></div>
<div class="a" style="left:40px;top:34px;width:1px;height:120px;background:#999"></div>
<div class="a" style="left:125px;top:34px;width:1px;height:120px;background:#999"></div>
<div class="a" style="left:226px;top:34px;width:1px;height:120px;background:#999"></div>
<div class="a" style="left:538px;top:34px;width:1px;height:120px;background:#999"></div>
<div class="a" style="left:41px;top:34px;width:84px;height:120px;background:#0078d7"></div>
<div class="t" style="left:44px;top:89px;color:#fff">1</div>
<div class="t" style="left:129px;top:89px;letter-spacing:-0.4px">Beverages</div>
<div class="t" style="left:230px;top:89px;letter-spacing:0.1px">Soft drinks, coffees, teas, beer, and ale</div>
<div class="a" style="left:0px;top:155px;width:712px;height:120px;background:#fff"></div>
<div class="a" style="left:0px;top:275px;width:40px;height:1px;background:#d0d0d0"></div>
<div class="a" style="left:40px;top:275px;width:672px;height:1px;background:#999"></div>
<div class="a" style="left:40px;top:155px;width:1px;height:120px;background:#999"></div>
<div class="a" style="left:125px;top:155px;width:1px;height:120px;background:#999"></div>
<div class="a" style="left:226px;top:155px;width:1px;height:120px;background:#999"></div>
<div class="a" style="left:538px;top:155px;width:1px;height:120px;background:#999"></div>
<div class="t" style="left:44px;top:210px;">2</div>
<div class="t" style="left:129px;top:210px;letter-spacing:0.14px">Condiments</div>
<div class="t" style="left:230px;top:210px;letter-spacing:0px">Sweet and savory sauces, relishes, spreads, and seasonings</div>
<div class="a" style="left:0px;top:276px;width:712px;height:120px;background:#fff"></div>
<div class="a" style="left:0px;top:396px;width:40px;height:1px;background:#d0d0d0"></div>
<div class="a" style="left:40px;top:396px;width:672px;height:1px;background:#999"></div>
<div class="a" style="left:40px;top:276px;width:1px;height:120px;background:#999"></div>
<div class="a" style="left:125px;top:276px;width:1px;height:120px;background:#999"></div>
<div class="a" style="left:226px;top:276px;width:1px;height:120px;background:#999"></div>
<div class="a" style="left:538px;top:276px;width:1px;height:120px;background:#999"></div>
<div class="t" style="left:44px;top:331px;">3</div>
<div class="t" style="left:129px;top:331px;letter-spacing:0.22px">Confections</div>
<div class="t" style="left:230px;top:331px;letter-spacing:0px">Desserts, candies, sweetbreads</div>
<svg style="left:7px;top:91px" width="6" height="10"><path d="M0 0 L5 5 L0 10z" fill="#333"/></svg>
</div><div class="a" style="left:0;top:0;width:986px;height:458px;overflow:hidden">
<svg style="left:764px;top:115px" width="172" height="120" viewBox="0 0 172 120">
<defs><pattern id="dth" width="2" height="2" patternUnits="userSpaceOnUse"><rect x="0" y="0" width="1" height="1" fill="#000"/><rect x="1" y="1" width="1" height="1" fill="#000"/></pattern>
<pattern id="dth2" width="2" height="2" patternUnits="userSpaceOnUse"><rect width="2" height="2" fill="#808000"/><rect x="0" y="0" width="1" height="1" fill="#000"/><rect x="1" y="1" width="1" height="1" fill="#000"/></pattern>
<pattern id="dthg" width="2" height="2" patternUnits="userSpaceOnUse"><rect width="2" height="2" fill="#fff"/><rect x="0" y="0" width="1" height="1" fill="#808080"/><rect x="1" y="1" width="1" height="1" fill="#808080"/></pattern></defs>
<g clip-path="inset(0)">
<path fill="rgb(90,170,60)" d="M0 0h2v2h-2zM4 0h2v2h-2zM6 0h2v2h-2zM72 0h2v2h-2zM74 0h2v2h-2zM110 0h2v2h-2zM128 0h2v2h-2zM132 0h2v2h-2zM170 0h2v2h-2zM2 2h2v2h-2zM24 2h2v2h-2zM28 2h2v2h-2zM68 2h2v2h-2zM72 2h2v2h-2zM80 2h2v2h-2zM82 2h2v2h-2zM124 2h2v2h-2zM126 2h2v2h-2zM70 4h2v2h-2zM72 4h2v2h-2zM74 4h2v2h-2zM108 4h2v2h-2zM114 4h2v2h-2zM132 4h2v2h-2zM134 4h2v2h-2zM152 4h2v2h-2zM4 6h2v2h-2zM6 6h2v2h-2zM34 6h2v2h-2zM40 6h2v2h-2zM130 6h2v2h-2zM150 6h2v2h-2zM0 8h2v2h-2zM2 8h2v2h-2zM22 8h2v2h-2zM28 8h2v2h-2zM72 8h2v2h-2zM172 8h2v2h-2zM0 10h2v2h-2zM8 10h2v2h-2zM12 10h2v2h-2zM68 10h2v2h-2zM78 10h2v2h-2zM148 10h2v2h-2zM0 12h2v2h-2zM4 12h2v2h-2zM24 12h2v2h-2zM36 12h2v2h-2zM78 14h2v2h-2zM84 14h2v2h-2zM172 14h2v2h-2zM86 16h2v2h-2zM112 16h2v2h-2zM120 16h2v2h-2zM154 16h2v2h-2zM10 18h2v2h-2zM14 18h2v2h-2zM26 18h2v2h-2zM82 18h2v2h-2zM124 18h2v2h-2zM170 18h2v2h-2zM32 20h2v2h-2zM82 20h2v2h-2zM98 20h2v2h-2zM144 20h2v2h-2zM170 20h2v2h-2zM2 22h2v2h-2zM48 22h2v2h-2zM58 22h2v2h-2zM62 22h2v2h-2zM68 22h2v2h-2zM84 22h2v2h-2zM90 22h2v2h-2zM92 22h2v2h-2zM104 22h2v2h-2zM138 22h2v2h-2zM144 22h2v2h-2zM150 22h2v2h-2zM36 24h2v2h-2zM46 24h2v2h-2zM82 24h2v2h-2zM92 24h2v2h-2zM106 24h2v2h-2zM116 24h2v2h-2zM142 24h2v2h-2zM148 24h2v2h-2zM34 26h2v2h-2zM38 26h2v2h-2zM40 26h2v2h-2zM80 26h2v2h-2zM84 26h2v2h-2zM130 26h2v2h-2zM138 26h2v2h-2zM164 26h2v2h-2zM168 26h2v2h-2zM172 26h2v2h-2zM32 28h2v2h-2zM58 28h2v2h-2zM80 28h2v2h-2zM82 28h2v2h-2zM94 28h2v2h-2zM158 28h2v2h-2zM30 30h2v2h-2zM34 30h2v2h-2zM38 30h2v2h-2zM50 30h2v2h-2zM90 30h2v2h-2zM124 30h2v2h-2zM168 30h2v2h-2zM6 32h2v2h-2zM34 32h2v2h-2zM58 32h2v2h-2zM114 32h2v2h-2zM128 32h2v2h-2zM138 32h2v2h-2zM156 32h2v2h-2zM30 34h2v2h-2zM32 34h2v2h-2zM82 34h2v2h-2zM130 34h2v2h-2zM132 34h2v2h-2zM142 34h2v2h-2zM12 36h2v2h-2zM30 36h2v2h-2zM32 36h2v2h-2zM42 36h2v2h-2zM68 36h2v2h-2zM78 36h2v2h-2zM96 36h2v2h-2zM100 36h2v2h-2zM128 36h2v2h-2zM132 36h2v2h-2zM134 36h2v2h-2zM150 36h2v2h-2zM172 36h2v2h-2zM32 38h2v2h-2zM106 38h2v2h-2zM112 38h2v2h-2zM126 38h2v2h-2zM128 38h2v2h-2zM130 38h2v2h-2zM134 38h2v2h-2zM140 38h2v2h-2zM142 38h2v2h-2zM2 40h2v2h-2zM22 40h2v2h-2zM24 40h2v2h-2zM28 40h2v2h-2zM30 40h2v2h-2zM34 40h2v2h-2zM38 40h2v2h-2zM66 40h2v2h-2zM68 40h2v2h-2zM76 40h2v2h-2zM104 40h2v2h-2zM106 40h2v2h-2zM116 40h2v2h-2zM118 40h2v2h-2zM122 40h2v2h-2zM128 40h2v2h-2zM132 40h2v2h-2zM20 42h2v2h-2zM26 42h2v2h-2zM30 42h2v2h-2zM52 42h2v2h-2zM94 42h2v2h-2zM98 42h2v2h-2zM100 42h2v2h-2zM106 42h2v2h-2zM114 42h2v2h-2zM116 42h2v2h-2zM120 42h2v2h-2zM122 42h2v2h-2zM126 42h2v2h-2zM128 42h2v2h-2zM160 42h2v2h-2zM26 44h2v2h-2zM30 44h2v2h-2zM56 44h2v2h-2zM106 44h2v2h-2zM108 44h2v2h-2zM110 44h2v2h-2zM116 44h2v2h-2zM120 44h2v2h-2zM122 44h2v2h-2zM124 44h2v2h-2zM130 44h2v2h-2zM132 44h2v2h-2zM14 46h2v2h-2zM16 46h2v2h-2zM24 46h2v2h-2zM26 46h2v2h-2zM32 46h2v2h-2zM62 46h2v2h-2zM98 46h2v2h-2zM102 46h2v2h-2zM104 46h2v2h-2zM108 46h2v2h-2zM110 46h2v2h-2zM114 46h2v2h-2zM116 46h2v2h-2zM120 46h2v2h-2zM122 46h2v2h-2zM128 46h2v2h-2zM152 46h2v2h-2zM32 48h2v2h-2zM66 48h2v2h-2zM106 48h2v2h-2zM110 48h2v2h-2zM112 48h2v2h-2zM114 48h2v2h-2zM116 48h2v2h-2zM118 48h2v2h-2zM120 48h2v2h-2zM24 50h2v2h-2zM26 50h2v2h-2zM74 50h2v2h-2zM84 50h2v2h-2zM96 50h2v2h-2zM104 50h2v2h-2zM110 50h2v2h-2zM114 50h2v2h-2zM116 50h2v2h-2zM118 50h2v2h-2zM120 50h2v2h-2zM122 50h2v2h-2zM24 52h2v2h-2zM66 52h2v2h-2zM86 52h2v2h-2zM90 52h2v2h-2zM108 52h2v2h-2zM114 52h2v2h-2zM118 52h2v2h-2zM120 52h2v2h-2zM124 52h2v2h-2zM134 52h2v2h-2zM30 54h2v2h-2zM82 54h2v2h-2zM90 54h2v2h-2zM130 54h2v2h-2zM0 56h2v2h-2zM60 56h2v2h-2zM64 56h2v2h-2zM78 56h2v2h-2zM80 56h2v2h-2zM116 56h2v2h-2zM118 56h2v2h-2zM172 56h2v2h-2zM2 58h2v2h-2zM78 58h2v2h-2zM90 58h2v2h-2zM108 58h2v2h-2zM110 58h2v2h-2zM114 58h2v2h-2zM148 58h2v2h-2zM154 58h2v2h-2zM156 58h2v2h-2zM158 58h2v2h-2zM26 60h2v2h-2zM42 60h2v2h-2zM88 60h2v2h-2zM110 60h2v2h-2zM112 60h2v2h-2zM122 60h2v2h-2zM136 60h2v2h-2zM138 60h2v2h-2zM154 60h2v2h-2zM156 60h2v2h-2zM20 62h2v2h-2zM42 62h2v2h-2zM76 62h2v2h-2zM88 62h2v2h-2zM156 62h2v2h-2zM16 64h2v2h-2zM28 64h2v2h-2zM78 64h2v2h-2zM80 64h2v2h-2zM90 64h2v2h-2zM102 64h2v2h-2zM110 64h2v2h-2zM120 64h2v2h-2zM148 64h2v2h-2zM150 64h2v2h-2zM154 64h2v2h-2zM172 64h2v2h-2zM24 66h2v2h-2zM34 66h2v2h-2zM76 66h2v2h-2zM80 66h2v2h-2zM82 66h2v2h-2zM144 66h2v2h-2zM158 66h2v2h-2zM162 66h2v2h-2zM10 68h2v2h-2zM78 68h2v2h-2zM90 68h2v2h-2zM94 68h2v2h-2zM136 68h2v2h-2zM144 68h2v2h-2zM146 68h2v2h-2zM156 68h2v2h-2zM10 70h2v2h-2zM38 70h2v2h-2zM46 70h2v2h-2zM54 70h2v2h-2zM56 70h2v2h-2zM64 70h2v2h-2zM138 70h2v2h-2zM140 70h2v2h-2zM144 70h2v2h-2zM150 70h2v2h-2zM158 70h2v2h-2zM168 70h2v2h-2zM78 72h2v2h-2zM134 72h2v2h-2zM144 72h2v2h-2zM146 72h2v2h-2zM148 72h2v2h-2zM150 72h2v2h-2zM156 72h2v2h-2zM162 72h2v2h-2zM164 72h2v2h-2zM2 74h2v2h-2zM68 74h2v2h-2zM134 74h2v2h-2zM140 74h2v2h-2zM146 74h2v2h-2zM148 74h2v2h-2zM172 74h2v2h-2zM60 76h2v2h-2zM62 76h2v2h-2zM68 76h2v2h-2zM102 76h2v2h-2zM148 76h2v2h-2zM52 78h2v2h-2zM68 78h2v2h-2zM126 78h2v2h-2zM138 78h2v2h-2zM142 78h2v2h-2zM144 78h2v2h-2zM148 78h2v2h-2zM150 78h2v2h-2zM12 80h2v2h-2zM26 80h2v2h-2zM84 80h2v2h-2zM112 80h2v2h-2zM140 80h2v2h-2zM142 80h2v2h-2zM144 80h2v2h-2zM146 80h2v2h-2zM166 80h2v2h-2zM168 80h2v2h-2zM172 80h2v2h-2zM42 82h2v2h-2zM112 82h2v2h-2zM92 84h2v2h-2zM96 84h2v2h-2zM158 84h2v2h-2zM50 86h2v2h-2zM68 86h2v2h-2zM72 86h2v2h-2zM76 86h2v2h-2zM82 86h2v2h-2zM110 86h2v2h-2zM138 86h2v2h-2zM166 86h2v2h-2zM168 86h2v2h-2z"/>
<path fill="rgb(60,80,200)" d="M2 0h2v2h-2zM32 0h2v2h-2zM36 0h2v2h-2zM42 0h2v2h-2zM46 0h2v2h-2zM48 0h2v2h-2zM64 0h2v2h-2zM66 0h2v2h-2zM68 0h2v2h-2zM70 0h2v2h-2zM112 0h2v2h-2zM114 0h2v2h-2zM120 0h2v2h-2zM134 0h2v2h-2zM136 0h2v2h-2zM160 0h2v2h-2zM166 0h2v2h-2zM34 2h2v2h-2zM46 2h2v2h-2zM54 2h2v2h-2zM58 2h2v2h-2zM66 2h2v2h-2zM70 2h2v2h-2zM74 2h2v2h-2zM96 2h2v2h-2zM104 2h2v2h-2zM106 2h2v2h-2zM132 2h2v2h-2zM136 2h2v2h-2zM138 2h2v2h-2zM152 2h2v2h-2zM28 4h2v2h-2zM34 4h2v2h-2zM38 4h2v2h-2zM40 4h2v2h-2zM48 4h2v2h-2zM52 4h2v2h-2zM60 4h2v2h-2zM66 4h2v2h-2zM110 4h2v2h-2zM112 4h2v2h-2zM126 4h2v2h-2zM128 4h2v2h-2zM130 4h2v2h-2zM140 4h2v2h-2zM142 4h2v2h-2zM164 4h2v2h-2zM166 4h2v2h-2zM46 6h2v2h-2zM64 6h2v2h-2zM66 6h2v2h-2zM68 6h2v2h-2zM74 6h2v2h-2zM98 6h2v2h-2zM128 6h2v2h-2zM138 6h2v2h-2zM162 6h2v2h-2zM172 6h2v2h-2zM4 8h2v2h-2zM30 8h2v2h-2zM34 8h2v2h-2zM40 8h2v2h-2zM48 8h2v2h-2zM60 8h2v2h-2zM70 8h2v2h-2zM74 8h2v2h-2zM106 8h2v2h-2zM126 8h2v2h-2zM130 8h2v2h-2zM168 8h2v2h-2zM28 10h2v2h-2zM36 10h2v2h-2zM42 10h2v2h-2zM44 10h2v2h-2zM62 10h2v2h-2zM70 10h2v2h-2zM130 10h2v2h-2zM132 10h2v2h-2zM134 10h2v2h-2zM136 10h2v2h-2zM158 10h2v2h-2zM160 10h2v2h-2zM162 10h2v2h-2zM32 12h2v2h-2zM38 12h2v2h-2zM44 12h2v2h-2zM110 12h2v2h-2zM112 12h2v2h-2zM136 12h2v2h-2zM0 14h2v2h-2zM42 14h2v2h-2zM44 14h2v2h-2zM62 14h2v2h-2zM70 14h2v2h-2zM148 14h2v2h-2zM156 14h2v2h-2zM18 16h2v2h-2zM20 16h2v2h-2zM28 16h2v2h-2zM36 16h2v2h-2zM64 16h2v2h-2zM82 16h2v2h-2zM100 16h2v2h-2zM114 16h2v2h-2zM124 16h2v2h-2zM142 16h2v2h-2zM30 18h2v2h-2zM34 18h2v2h-2zM36 18h2v2h-2zM48 18h2v2h-2zM50 18h2v2h-2zM94 18h2v2h-2zM98 18h2v2h-2zM150 18h2v2h-2zM154 18h2v2h-2zM26 20h2v2h-2zM34 20h2v2h-2zM36 20h2v2h-2zM40 20h2v2h-2zM42 20h2v2h-2zM44 20h2v2h-2zM62 20h2v2h-2zM104 20h2v2h-2zM108 20h2v2h-2zM14 22h2v2h-2zM32 22h2v2h-2zM44 22h2v2h-2zM88 22h2v2h-2zM98 22h2v2h-2zM100 22h2v2h-2zM110 22h2v2h-2zM112 22h2v2h-2zM12 24h2v2h-2zM38 24h2v2h-2zM42 24h2v2h-2zM48 24h2v2h-2zM84 24h2v2h-2zM86 24h2v2h-2zM88 24h2v2h-2zM94 24h2v2h-2zM96 24h2v2h-2zM98 24h2v2h-2zM104 24h2v2h-2zM108 24h2v2h-2zM112 24h2v2h-2zM118 24h2v2h-2zM130 24h2v2h-2zM36 26h2v2h-2zM42 26h2v2h-2zM96 26h2v2h-2zM112 26h2v2h-2zM116 26h2v2h-2zM118 26h2v2h-2zM122 26h2v2h-2zM134 26h2v2h-2zM10 28h2v2h-2zM40 28h2v2h-2zM48 28h2v2h-2zM54 28h2v2h-2zM74 28h2v2h-2zM84 28h2v2h-2zM86 28h2v2h-2zM92 28h2v2h-2zM96 28h2v2h-2zM98 28h2v2h-2zM106 28h2v2h-2zM116 28h2v2h-2zM118 28h2v2h-2zM120 28h2v2h-2zM122 28h2v2h-2zM142 28h2v2h-2zM170 28h2v2h-2zM36 30h2v2h-2zM44 30h2v2h-2zM80 30h2v2h-2zM82 30h2v2h-2zM96 30h2v2h-2zM98 30h2v2h-2zM162 30h2v2h-2zM4 32h2v2h-2zM16 32h2v2h-2zM42 32h2v2h-2zM48 32h2v2h-2zM80 32h2v2h-2zM82 32h2v2h-2zM86 32h2v2h-2zM90 32h2v2h-2zM94 32h2v2h-2zM146 32h2v2h-2zM168 32h2v2h-2zM40 34h2v2h-2zM52 34h2v2h-2zM54 34h2v2h-2zM62 34h2v2h-2zM76 34h2v2h-2zM86 34h2v2h-2zM94 34h2v2h-2zM102 34h2v2h-2zM114 34h2v2h-2zM118 34h2v2h-2zM134 34h2v2h-2zM136 34h2v2h-2zM146 34h2v2h-2zM170 34h2v2h-2zM4 36h2v2h-2zM16 36h2v2h-2zM24 36h2v2h-2zM52 36h2v2h-2zM80 36h2v2h-2zM82 36h2v2h-2zM86 36h2v2h-2zM20 38h2v2h-2zM30 38h2v2h-2zM46 38h2v2h-2zM54 38h2v2h-2zM56 38h2v2h-2zM68 38h2v2h-2zM76 38h2v2h-2zM78 38h2v2h-2zM90 38h2v2h-2zM110 38h2v2h-2zM116 38h2v2h-2zM136 38h2v2h-2zM146 38h2v2h-2zM166 38h2v2h-2zM170 38h2v2h-2zM56 40h2v2h-2zM78 40h2v2h-2zM172 40h2v2h-2zM62 42h2v2h-2zM70 42h2v2h-2zM72 42h2v2h-2zM76 42h2v2h-2zM84 42h2v2h-2zM88 42h2v2h-2zM142 42h2v2h-2zM150 42h2v2h-2zM158 42h2v2h-2zM166 42h2v2h-2zM172 42h2v2h-2zM18 44h2v2h-2zM46 44h2v2h-2zM58 44h2v2h-2zM78 44h2v2h-2zM80 44h2v2h-2zM84 44h2v2h-2zM104 44h2v2h-2zM128 44h2v2h-2zM156 44h2v2h-2zM168 44h2v2h-2zM170 44h2v2h-2zM52 46h2v2h-2zM58 46h2v2h-2zM68 46h2v2h-2zM70 46h2v2h-2zM76 46h2v2h-2zM124 46h2v2h-2zM144 46h2v2h-2zM166 46h2v2h-2zM18 48h2v2h-2zM22 48h2v2h-2zM28 48h2v2h-2zM44 48h2v2h-2zM46 48h2v2h-2zM50 48h2v2h-2zM68 48h2v2h-2zM80 48h2v2h-2zM102 48h2v2h-2zM122 48h2v2h-2zM150 48h2v2h-2zM168 48h2v2h-2zM10 50h2v2h-2zM12 50h2v2h-2zM20 50h2v2h-2zM22 50h2v2h-2zM50 50h2v2h-2zM68 50h2v2h-2zM102 50h2v2h-2zM108 50h2v2h-2zM144 50h2v2h-2zM154 50h2v2h-2zM168 50h2v2h-2zM10 52h2v2h-2zM12 52h2v2h-2zM18 52h2v2h-2zM20 52h2v2h-2zM32 52h2v2h-2zM50 52h2v2h-2zM68 52h2v2h-2zM102 52h2v2h-2zM110 52h2v2h-2zM136 52h2v2h-2zM4 54h2v2h-2zM16 54h2v2h-2zM20 54h2v2h-2zM46 54h2v2h-2zM56 54h2v2h-2zM60 54h2v2h-2zM72 54h2v2h-2zM94 54h2v2h-2zM134 54h2v2h-2zM138 54h2v2h-2zM144 54h2v2h-2zM146 54h2v2h-2zM148 54h2v2h-2zM150 54h2v2h-2zM8 56h2v2h-2zM16 56h2v2h-2zM34 56h2v2h-2zM38 56h2v2h-2zM46 56h2v2h-2zM52 56h2v2h-2zM132 56h2v2h-2zM148 56h2v2h-2zM150 56h2v2h-2zM164 56h2v2h-2zM10 58h2v2h-2zM14 58h2v2h-2zM16 58h2v2h-2zM18 58h2v2h-2zM40 58h2v2h-2zM48 58h2v2h-2zM98 58h2v2h-2zM144 58h2v2h-2zM152 58h2v2h-2zM6 60h2v2h-2zM12 60h2v2h-2zM18 60h2v2h-2zM44 60h2v2h-2zM46 60h2v2h-2zM60 60h2v2h-2zM64 60h2v2h-2zM92 60h2v2h-2zM98 60h2v2h-2zM130 60h2v2h-2zM146 60h2v2h-2zM148 60h2v2h-2zM38 62h2v2h-2zM74 62h2v2h-2zM110 62h2v2h-2zM134 62h2v2h-2zM142 62h2v2h-2zM148 62h2v2h-2zM162 62h2v2h-2zM44 64h2v2h-2zM106 64h2v2h-2zM108 64h2v2h-2zM136 64h2v2h-2zM146 64h2v2h-2zM168 64h2v2h-2zM40 66h2v2h-2zM48 66h2v2h-2zM50 66h2v2h-2zM156 66h2v2h-2zM172 66h2v2h-2zM0 68h2v2h-2zM12 68h2v2h-2zM28 68h2v2h-2zM44 68h2v2h-2zM110 68h2v2h-2zM112 68h2v2h-2zM162 68h2v2h-2zM50 70h2v2h-2zM74 70h2v2h-2zM2 72h2v2h-2zM12 72h2v2h-2zM44 72h2v2h-2zM94 72h2v2h-2zM120 72h2v2h-2zM122 72h2v2h-2zM6 74h2v2h-2zM50 74h2v2h-2zM108 74h2v2h-2zM132 74h2v2h-2zM152 74h2v2h-2zM162 74h2v2h-2zM164 74h2v2h-2zM2 76h2v2h-2zM86 76h2v2h-2zM128 76h2v2h-2zM140 76h2v2h-2zM142 76h2v2h-2zM168 76h2v2h-2zM50 78h2v2h-2zM80 78h2v2h-2zM82 78h2v2h-2zM86 78h2v2h-2zM88 78h2v2h-2zM92 78h2v2h-2zM136 78h2v2h-2zM166 78h2v2h-2zM172 78h2v2h-2zM20 80h2v2h-2zM74 80h2v2h-2zM78 80h2v2h-2zM86 80h2v2h-2zM106 80h2v2h-2zM4 82h2v2h-2zM82 82h2v2h-2zM84 82h2v2h-2zM86 82h2v2h-2zM90 82h2v2h-2zM116 82h2v2h-2zM132 82h2v2h-2zM136 82h2v2h-2zM140 82h2v2h-2zM152 82h2v2h-2zM170 82h2v2h-2zM172 82h2v2h-2zM8 84h2v2h-2zM32 84h2v2h-2zM52 84h2v2h-2zM76 84h2v2h-2zM80 84h2v2h-2zM114 84h2v2h-2zM116 84h2v2h-2zM118 84h2v2h-2zM134 84h2v2h-2zM140 84h2v2h-2zM164 84h2v2h-2zM170 84h2v2h-2zM172 84h2v2h-2zM34 86h2v2h-2zM54 86h2v2h-2zM78 86h2v2h-2zM80 86h2v2h-2zM88 86h2v2h-2zM96 86h2v2h-2zM148 86h2v2h-2zM172 86h2v2h-2z"/>
<path fill="rgb(130,60,160)" d="M8 0h2v2h-2zM12 0h2v2h-2zM16 0h2v2h-2zM20 0h2v2h-2zM44 0h2v2h-2zM58 0h2v2h-2zM80 0h2v2h-2zM138 0h2v2h-2zM148 0h2v2h-2zM164 0h2v2h-2zM6 2h2v2h-2zM10 2h2v2h-2zM12 2h2v2h-2zM142 2h2v2h-2zM166 2h2v2h-2zM10 4h2v2h-2zM14 4h2v2h-2zM16 4h2v2h-2zM102 4h2v2h-2zM146 4h2v2h-2zM168 4h2v2h-2zM14 6h2v2h-2zM140 6h2v2h-2zM144 6h2v2h-2zM146 6h2v2h-2zM108 8h2v2h-2zM110 8h2v2h-2zM150 8h2v2h-2zM164 8h2v2h-2zM170 8h2v2h-2zM14 10h2v2h-2zM18 10h2v2h-2zM22 10h2v2h-2zM66 10h2v2h-2zM118 10h2v2h-2zM124 10h2v2h-2zM142 10h2v2h-2zM146 10h2v2h-2zM172 10h2v2h-2zM6 12h2v2h-2zM12 12h2v2h-2zM16 12h2v2h-2zM80 12h2v2h-2zM84 12h2v2h-2zM118 12h2v2h-2zM142 12h2v2h-2zM144 12h2v2h-2zM162 12h2v2h-2zM166 12h2v2h-2zM168 12h2v2h-2zM172 12h2v2h-2zM90 14h2v2h-2zM144 14h2v2h-2zM164 14h2v2h-2zM32 16h2v2h-2zM38 16h2v2h-2zM42 16h2v2h-2zM60 16h2v2h-2zM134 16h2v2h-2zM146 16h2v2h-2zM164 16h2v2h-2zM40 18h2v2h-2zM60 18h2v2h-2zM118 18h2v2h-2zM120 18h2v2h-2zM138 18h2v2h-2zM172 18h2v2h-2zM8 20h2v2h-2zM28 20h2v2h-2zM64 20h2v2h-2zM94 20h2v2h-2zM112 20h2v2h-2zM118 20h2v2h-2zM138 20h2v2h-2zM146 20h2v2h-2zM156 20h2v2h-2zM34 22h2v2h-2zM36 22h2v2h-2zM38 22h2v2h-2zM52 22h2v2h-2zM106 22h2v2h-2zM108 22h2v2h-2zM118 22h2v2h-2zM136 22h2v2h-2zM172 22h2v2h-2zM28 24h2v2h-2zM32 24h2v2h-2zM34 24h2v2h-2zM40 24h2v2h-2zM60 24h2v2h-2zM76 24h2v2h-2zM78 24h2v2h-2zM114 24h2v2h-2zM30 26h2v2h-2zM32 26h2v2h-2zM48 26h2v2h-2zM54 26h2v2h-2zM60 26h2v2h-2zM76 26h2v2h-2zM148 26h2v2h-2zM30 28h2v2h-2zM62 28h2v2h-2zM70 28h2v2h-2zM78 28h2v2h-2zM90 28h2v2h-2zM100 28h2v2h-2zM28 30h2v2h-2zM62 30h2v2h-2zM64 30h2v2h-2zM72 30h2v2h-2zM24 32h2v2h-2zM28 32h2v2h-2zM50 32h2v2h-2zM64 32h2v2h-2zM70 32h2v2h-2zM112 32h2v2h-2zM116 32h2v2h-2zM122 32h2v2h-2zM158 32h2v2h-2zM20 34h2v2h-2zM34 34h2v2h-2zM60 34h2v2h-2zM64 34h2v2h-2zM74 34h2v2h-2zM80 34h2v2h-2zM84 34h2v2h-2zM100 34h2v2h-2zM148 34h2v2h-2zM172 34h2v2h-2zM14 36h2v2h-2zM60 36h2v2h-2zM64 36h2v2h-2zM66 36h2v2h-2zM72 36h2v2h-2zM76 36h2v2h-2zM130 36h2v2h-2zM12 38h2v2h-2zM14 38h2v2h-2zM26 38h2v2h-2zM36 38h2v2h-2zM58 38h2v2h-2zM64 38h2v2h-2zM66 38h2v2h-2zM74 38h2v2h-2zM164 38h2v2h-2zM20 40h2v2h-2zM26 40h2v2h-2zM32 40h2v2h-2zM36 40h2v2h-2zM58 40h2v2h-2zM64 40h2v2h-2zM84 40h2v2h-2zM120 40h2v2h-2zM136 40h2v2h-2zM12 42h2v2h-2zM14 42h2v2h-2zM18 42h2v2h-2zM28 42h2v2h-2zM32 42h2v2h-2zM36 42h2v2h-2zM40 42h2v2h-2zM78 42h2v2h-2zM80 42h2v2h-2zM92 42h2v2h-2zM4 44h2v2h-2zM20 44h2v2h-2zM24 44h2v2h-2zM32 44h2v2h-2zM36 44h2v2h-2zM126 44h2v2h-2zM18 46h2v2h-2zM36 46h2v2h-2zM42 46h2v2h-2zM118 46h2v2h-2zM150 46h2v2h-2zM154 46h2v2h-2zM16 48h2v2h-2zM34 48h2v2h-2zM36 48h2v2h-2zM40 48h2v2h-2zM72 48h2v2h-2zM92 48h2v2h-2zM126 48h2v2h-2zM128 48h2v2h-2zM158 48h2v2h-2zM0 50h2v2h-2zM14 50h2v2h-2zM16 50h2v2h-2zM18 50h2v2h-2zM40 50h2v2h-2zM124 50h2v2h-2zM26 52h2v2h-2zM64 52h2v2h-2zM116 52h2v2h-2zM122 52h2v2h-2zM126 52h2v2h-2zM128 52h2v2h-2zM138 52h2v2h-2zM28 54h2v2h-2zM54 54h2v2h-2zM66 54h2v2h-2zM78 54h2v2h-2zM110 54h2v2h-2zM116 54h2v2h-2zM118 54h2v2h-2zM122 54h2v2h-2zM96 56h2v2h-2zM98 56h2v2h-2zM122 56h2v2h-2zM130 56h2v2h-2zM144 56h2v2h-2zM146 56h2v2h-2zM102 58h2v2h-2zM104 58h2v2h-2zM120 58h2v2h-2zM124 58h2v2h-2zM132 58h2v2h-2zM136 58h2v2h-2zM30 60h2v2h-2zM48 60h2v2h-2zM52 60h2v2h-2zM94 60h2v2h-2zM96 60h2v2h-2zM106 60h2v2h-2zM120 60h2v2h-2zM128 60h2v2h-2zM132 60h2v2h-2zM8 62h2v2h-2zM54 62h2v2h-2zM62 62h2v2h-2zM96 62h2v2h-2zM106 62h2v2h-2zM128 62h2v2h-2zM168 62h2v2h-2zM48 64h2v2h-2zM50 64h2v2h-2zM54 64h2v2h-2zM56 64h2v2h-2zM60 64h2v2h-2zM64 64h2v2h-2zM70 64h2v2h-2zM104 64h2v2h-2zM112 64h2v2h-2zM114 64h2v2h-2zM126 64h2v2h-2zM6 66h2v2h-2zM10 66h2v2h-2zM14 66h2v2h-2zM52 66h2v2h-2zM54 66h2v2h-2zM56 66h2v2h-2zM96 66h2v2h-2zM100 66h2v2h-2zM104 66h2v2h-2zM106 66h2v2h-2zM114 66h2v2h-2zM120 66h2v2h-2zM126 66h2v2h-2zM128 66h2v2h-2zM20 68h2v2h-2zM58 68h2v2h-2zM68 68h2v2h-2zM76 68h2v2h-2zM104 68h2v2h-2zM108 68h2v2h-2zM118 68h2v2h-2zM124 68h2v2h-2zM126 68h2v2h-2zM134 68h2v2h-2zM152 68h2v2h-2zM0 70h2v2h-2zM2 70h2v2h-2zM8 70h2v2h-2zM16 70h2v2h-2zM18 70h2v2h-2zM72 70h2v2h-2zM78 70h2v2h-2zM94 70h2v2h-2zM104 70h2v2h-2zM106 70h2v2h-2zM108 70h2v2h-2zM114 70h2v2h-2zM148 70h2v2h-2zM156 70h2v2h-2zM0 72h2v2h-2zM4 72h2v2h-2zM6 72h2v2h-2zM14 72h2v2h-2zM16 72h2v2h-2zM18 72h2v2h-2zM22 72h2v2h-2zM24 72h2v2h-2zM30 72h2v2h-2zM66 72h2v2h-2zM70 72h2v2h-2zM74 72h2v2h-2zM114 72h2v2h-2zM140 72h2v2h-2zM152 72h2v2h-2zM0 74h2v2h-2zM4 74h2v2h-2zM8 74h2v2h-2zM12 74h2v2h-2zM14 74h2v2h-2zM16 74h2v2h-2zM20 74h2v2h-2zM56 74h2v2h-2zM70 74h2v2h-2zM72 74h2v2h-2zM102 74h2v2h-2zM104 74h2v2h-2zM106 74h2v2h-2zM112 74h2v2h-2zM114 74h2v2h-2zM116 74h2v2h-2zM144 74h2v2h-2zM0 76h2v2h-2zM8 76h2v2h-2zM10 76h2v2h-2zM74 76h2v2h-2zM76 76h2v2h-2zM92 76h2v2h-2zM94 76h2v2h-2zM106 76h2v2h-2zM114 76h2v2h-2zM122 76h2v2h-2zM164 76h2v2h-2zM172 76h2v2h-2zM4 78h2v2h-2zM10 78h2v2h-2zM14 78h2v2h-2zM16 78h2v2h-2zM20 78h2v2h-2zM72 78h2v2h-2zM74 78h2v2h-2zM78 78h2v2h-2zM108 78h2v2h-2zM112 78h2v2h-2zM118 78h2v2h-2zM120 78h2v2h-2zM160 78h2v2h-2zM162 78h2v2h-2zM4 80h2v2h-2zM6 80h2v2h-2zM24 80h2v2h-2zM38 80h2v2h-2zM44 80h2v2h-2zM60 80h2v2h-2zM68 80h2v2h-2zM76 80h2v2h-2zM108 80h2v2h-2zM114 80h2v2h-2zM170 80h2v2h-2zM2 82h2v2h-2zM12 82h2v2h-2zM106 82h2v2h-2zM114 82h2v2h-2zM138 82h2v2h-2zM154 82h2v2h-2zM160 82h2v2h-2zM164 82h2v2h-2zM58 84h2v2h-2zM104 84h2v2h-2zM136 84h2v2h-2zM144 84h2v2h-2zM160 84h2v2h-2zM162 84h2v2h-2zM86 86h2v2h-2zM102 86h2v2h-2zM150 86h2v2h-2zM154 86h2v2h-2zM158 86h2v2h-2zM164 86h2v2h-2z"/>
<path fill="rgb(150,140,30)" d="M10 0h2v2h-2zM26 0h2v2h-2zM60 0h2v2h-2zM122 0h2v2h-2zM126 0h2v2h-2zM172 0h2v2h-2zM8 2h2v2h-2zM38 2h2v2h-2zM88 2h2v2h-2zM108 2h2v2h-2zM110 2h2v2h-2zM116 2h2v2h-2zM118 2h2v2h-2zM130 2h2v2h-2zM170 2h2v2h-2zM172 2h2v2h-2zM0 4h2v2h-2zM20 4h2v2h-2zM42 4h2v2h-2zM64 4h2v2h-2zM82 4h2v2h-2zM118 4h2v2h-2zM120 4h2v2h-2zM124 4h2v2h-2zM170 4h2v2h-2zM172 4h2v2h-2zM8 6h2v2h-2zM18 6h2v2h-2zM50 6h2v2h-2zM104 6h2v2h-2zM108 6h2v2h-2zM114 6h2v2h-2zM122 6h2v2h-2zM158 6h2v2h-2zM170 6h2v2h-2zM42 8h2v2h-2zM44 8h2v2h-2zM54 8h2v2h-2zM82 8h2v2h-2zM90 8h2v2h-2zM112 8h2v2h-2zM114 8h2v2h-2zM116 8h2v2h-2zM118 8h2v2h-2zM122 8h2v2h-2zM124 8h2v2h-2zM166 8h2v2h-2zM6 10h2v2h-2zM20 10h2v2h-2zM34 10h2v2h-2zM86 10h2v2h-2zM110 10h2v2h-2zM112 10h2v2h-2zM114 10h2v2h-2zM116 10h2v2h-2zM170 10h2v2h-2zM40 12h2v2h-2zM46 12h2v2h-2zM48 12h2v2h-2zM50 12h2v2h-2zM52 12h2v2h-2zM116 12h2v2h-2zM22 14h2v2h-2zM40 14h2v2h-2zM48 14h2v2h-2zM60 14h2v2h-2zM66 14h2v2h-2zM74 14h2v2h-2zM94 14h2v2h-2zM114 14h2v2h-2zM120 14h2v2h-2zM124 14h2v2h-2zM128 14h2v2h-2zM146 14h2v2h-2zM154 14h2v2h-2zM4 16h2v2h-2zM24 16h2v2h-2zM40 16h2v2h-2zM50 16h2v2h-2zM72 16h2v2h-2zM76 16h2v2h-2zM78 16h2v2h-2zM96 16h2v2h-2zM108 16h2v2h-2zM160 16h2v2h-2zM166 16h2v2h-2zM38 18h2v2h-2zM72 18h2v2h-2zM80 18h2v2h-2zM84 18h2v2h-2zM112 18h2v2h-2zM116 18h2v2h-2zM146 18h2v2h-2zM156 18h2v2h-2zM48 20h2v2h-2zM58 20h2v2h-2zM66 20h2v2h-2zM78 20h2v2h-2zM80 20h2v2h-2zM106 20h2v2h-2zM120 20h2v2h-2zM148 20h2v2h-2zM152 20h2v2h-2zM4 22h2v2h-2zM42 22h2v2h-2zM50 22h2v2h-2zM70 22h2v2h-2zM74 22h2v2h-2zM116 22h2v2h-2zM146 22h2v2h-2zM148 22h2v2h-2zM16 24h2v2h-2zM50 24h2v2h-2zM58 24h2v2h-2zM70 24h2v2h-2zM72 24h2v2h-2zM80 24h2v2h-2zM154 24h2v2h-2zM156 24h2v2h-2zM162 24h2v2h-2zM56 26h2v2h-2zM58 26h2v2h-2zM68 26h2v2h-2zM72 26h2v2h-2zM74 26h2v2h-2zM78 26h2v2h-2zM140 26h2v2h-2zM156 26h2v2h-2zM162 26h2v2h-2zM2 28h2v2h-2zM4 28h2v2h-2zM22 28h2v2h-2zM24 28h2v2h-2zM60 28h2v2h-2zM68 28h2v2h-2zM72 28h2v2h-2zM114 28h2v2h-2zM140 28h2v2h-2zM146 28h2v2h-2zM160 28h2v2h-2zM164 28h2v2h-2zM24 30h2v2h-2zM46 30h2v2h-2zM52 30h2v2h-2zM56 30h2v2h-2zM58 30h2v2h-2zM70 30h2v2h-2zM74 30h2v2h-2zM76 30h2v2h-2zM78 30h2v2h-2zM152 30h2v2h-2zM52 32h2v2h-2zM54 32h2v2h-2zM60 32h2v2h-2zM62 32h2v2h-2zM66 32h2v2h-2zM74 32h2v2h-2zM76 32h2v2h-2zM84 32h2v2h-2zM92 32h2v2h-2zM150 32h2v2h-2zM166 32h2v2h-2zM172 32h2v2h-2zM6 34h2v2h-2zM68 34h2v2h-2zM70 34h2v2h-2zM78 34h2v2h-2zM92 34h2v2h-2zM98 34h2v2h-2zM152 34h2v2h-2zM156 34h2v2h-2zM160 34h2v2h-2zM10 36h2v2h-2zM34 36h2v2h-2zM54 36h2v2h-2zM70 36h2v2h-2zM74 36h2v2h-2zM84 36h2v2h-2zM138 36h2v2h-2zM40 38h2v2h-2zM60 38h2v2h-2zM72 38h2v2h-2zM82 38h2v2h-2zM98 38h2v2h-2zM108 38h2v2h-2zM154 38h2v2h-2zM6 40h2v2h-2zM18 40h2v2h-2zM52 40h2v2h-2zM60 40h2v2h-2zM70 40h2v2h-2zM74 40h2v2h-2zM138 40h2v2h-2zM154 40h2v2h-2zM56 42h2v2h-2zM58 42h2v2h-2zM60 42h2v2h-2zM82 42h2v2h-2zM118 42h2v2h-2zM72 44h2v2h-2zM76 44h2v2h-2zM2 46h2v2h-2zM4 46h2v2h-2zM60 46h2v2h-2zM106 46h2v2h-2zM160 46h2v2h-2zM170 46h2v2h-2zM2 48h2v2h-2zM26 48h2v2h-2zM140 48h2v2h-2zM146 48h2v2h-2zM154 48h2v2h-2zM48 50h2v2h-2zM54 50h2v2h-2zM130 50h2v2h-2zM170 50h2v2h-2zM172 50h2v2h-2zM14 52h2v2h-2zM80 52h2v2h-2zM168 52h2v2h-2zM172 52h2v2h-2zM12 54h2v2h-2zM166 54h2v2h-2zM170 54h2v2h-2zM172 54h2v2h-2zM2 56h2v2h-2zM4 56h2v2h-2zM72 56h2v2h-2zM108 56h2v2h-2zM124 56h2v2h-2zM158 56h2v2h-2zM8 58h2v2h-2zM70 58h2v2h-2zM94 58h2v2h-2zM172 58h2v2h-2zM10 60h2v2h-2zM40 60h2v2h-2zM150 60h2v2h-2zM158 60h2v2h-2zM166 60h2v2h-2zM168 60h2v2h-2zM170 60h2v2h-2zM0 62h2v2h-2zM2 62h2v2h-2zM4 62h2v2h-2zM46 62h2v2h-2zM86 62h2v2h-2zM152 62h2v2h-2zM166 62h2v2h-2zM172 62h2v2h-2zM2 64h2v2h-2zM6 64h2v2h-2zM10 64h2v2h-2zM88 64h2v2h-2zM166 64h2v2h-2zM8 66h2v2h-2zM12 66h2v2h-2zM18 66h2v2h-2zM26 66h2v2h-2zM108 66h2v2h-2zM112 66h2v2h-2zM2 68h2v2h-2zM8 68h2v2h-2zM16 68h2v2h-2zM30 68h2v2h-2zM32 68h2v2h-2zM64 68h2v2h-2zM82 68h2v2h-2zM128 68h2v2h-2zM140 68h2v2h-2zM166 68h2v2h-2zM172 68h2v2h-2zM4 70h2v2h-2zM30 70h2v2h-2zM36 70h2v2h-2zM126 70h2v2h-2zM172 70h2v2h-2zM8 72h2v2h-2zM10 72h2v2h-2zM20 72h2v2h-2zM26 72h2v2h-2zM28 72h2v2h-2zM36 72h2v2h-2zM42 72h2v2h-2zM24 74h2v2h-2zM28 74h2v2h-2zM30 74h2v2h-2zM32 74h2v2h-2zM34 74h2v2h-2zM36 74h2v2h-2zM38 74h2v2h-2zM92 74h2v2h-2zM142 74h2v2h-2zM150 74h2v2h-2zM22 76h2v2h-2zM24 76h2v2h-2zM30 76h2v2h-2zM38 76h2v2h-2zM88 76h2v2h-2zM108 76h2v2h-2zM126 76h2v2h-2zM24 78h2v2h-2zM26 78h2v2h-2zM28 78h2v2h-2zM30 78h2v2h-2zM32 78h2v2h-2zM34 78h2v2h-2zM46 78h2v2h-2zM122 78h2v2h-2zM158 78h2v2h-2zM34 80h2v2h-2zM36 80h2v2h-2zM104 80h2v2h-2zM126 80h2v2h-2zM138 80h2v2h-2zM148 80h2v2h-2zM150 80h2v2h-2zM30 82h2v2h-2zM36 82h2v2h-2zM80 82h2v2h-2zM118 82h2v2h-2zM120 82h2v2h-2zM124 82h2v2h-2zM130 82h2v2h-2zM134 82h2v2h-2zM168 82h2v2h-2zM4 84h2v2h-2zM30 84h2v2h-2zM120 84h2v2h-2zM122 84h2v2h-2zM126 84h2v2h-2zM142 84h2v2h-2zM148 84h2v2h-2zM150 84h2v2h-2zM152 84h2v2h-2zM116 86h2v2h-2zM120 86h2v2h-2zM126 86h2v2h-2zM132 86h2v2h-2zM140 86h2v2h-2zM146 86h2v2h-2zM152 86h2v2h-2zM160 86h2v2h-2z"/>
<path fill="rgb(70,130,50)" d="M14 0h2v2h-2zM50 0h2v2h-2zM52 0h2v2h-2zM54 0h2v2h-2zM56 0h2v2h-2zM62 0h2v2h-2zM84 0h2v2h-2zM96 0h2v2h-2zM100 0h2v2h-2zM102 0h2v2h-2zM104 0h2v2h-2zM106 0h2v2h-2zM108 0h2v2h-2zM144 0h2v2h-2zM158 0h2v2h-2zM0 2h2v2h-2zM32 2h2v2h-2zM48 2h2v2h-2zM50 2h2v2h-2zM52 2h2v2h-2zM62 2h2v2h-2zM64 2h2v2h-2zM98 2h2v2h-2zM102 2h2v2h-2zM112 2h2v2h-2zM114 2h2v2h-2zM168 2h2v2h-2zM2 4h2v2h-2zM54 4h2v2h-2zM58 4h2v2h-2zM100 4h2v2h-2zM104 4h2v2h-2zM106 4h2v2h-2zM160 4h2v2h-2zM48 6h2v2h-2zM54 6h2v2h-2zM58 6h2v2h-2zM78 6h2v2h-2zM102 6h2v2h-2zM132 6h2v2h-2zM136 6h2v2h-2zM156 6h2v2h-2zM52 8h2v2h-2zM62 8h2v2h-2zM128 8h2v2h-2zM132 8h2v2h-2zM138 8h2v2h-2zM140 8h2v2h-2zM50 10h2v2h-2zM52 10h2v2h-2zM54 10h2v2h-2zM56 10h2v2h-2zM96 10h2v2h-2zM100 10h2v2h-2zM102 10h2v2h-2zM104 10h2v2h-2zM108 10h2v2h-2zM128 10h2v2h-2zM104 12h2v2h-2zM108 12h2v2h-2zM120 12h2v2h-2zM134 12h2v2h-2zM138 12h2v2h-2zM140 12h2v2h-2zM12 14h2v2h-2zM58 14h2v2h-2zM102 14h2v2h-2zM106 14h2v2h-2zM122 14h2v2h-2zM126 14h2v2h-2zM136 14h2v2h-2zM30 16h2v2h-2zM110 16h2v2h-2zM130 16h2v2h-2zM136 16h2v2h-2zM144 16h2v2h-2zM156 16h2v2h-2zM22 18h2v2h-2zM32 18h2v2h-2zM56 18h2v2h-2zM64 18h2v2h-2zM134 18h2v2h-2zM168 18h2v2h-2zM18 20h2v2h-2zM38 20h2v2h-2zM102 20h2v2h-2zM114 20h2v2h-2zM134 20h2v2h-2zM142 20h2v2h-2zM26 22h2v2h-2zM28 22h2v2h-2zM128 22h2v2h-2zM130 22h2v2h-2zM142 22h2v2h-2zM170 22h2v2h-2zM24 24h2v2h-2zM30 24h2v2h-2zM44 24h2v2h-2zM66 24h2v2h-2zM100 24h2v2h-2zM140 24h2v2h-2zM164 24h2v2h-2zM170 24h2v2h-2zM20 26h2v2h-2zM28 26h2v2h-2zM66 26h2v2h-2zM82 26h2v2h-2zM86 26h2v2h-2zM94 26h2v2h-2zM100 26h2v2h-2zM108 26h2v2h-2zM114 26h2v2h-2zM20 28h2v2h-2zM26 28h2v2h-2zM102 28h2v2h-2zM112 28h2v2h-2zM138 28h2v2h-2zM156 28h2v2h-2zM168 28h2v2h-2zM26 30h2v2h-2zM92 30h2v2h-2zM100 30h2v2h-2zM102 30h2v2h-2zM106 30h2v2h-2zM110 30h2v2h-2zM114 30h2v2h-2zM116 30h2v2h-2zM118 30h2v2h-2zM128 30h2v2h-2zM154 30h2v2h-2zM172 30h2v2h-2zM12 32h2v2h-2zM26 32h2v2h-2zM30 32h2v2h-2zM46 32h2v2h-2zM110 32h2v2h-2zM120 32h2v2h-2zM136 32h2v2h-2zM22 34h2v2h-2zM36 34h2v2h-2zM42 34h2v2h-2zM106 34h2v2h-2zM110 34h2v2h-2zM112 34h2v2h-2zM116 34h2v2h-2zM120 34h2v2h-2zM140 34h2v2h-2zM22 36h2v2h-2zM40 36h2v2h-2zM56 36h2v2h-2zM116 36h2v2h-2zM118 36h2v2h-2zM142 36h2v2h-2zM22 38h2v2h-2zM120 38h2v2h-2zM132 38h2v2h-2zM148 38h2v2h-2zM80 40h2v2h-2zM108 40h2v2h-2zM110 40h2v2h-2zM112 40h2v2h-2zM114 40h2v2h-2zM38 42h2v2h-2zM90 42h2v2h-2zM108 42h2v2h-2zM110 42h2v2h-2zM132 42h2v2h-2zM8 44h2v2h-2zM82 44h2v2h-2zM90 44h2v2h-2zM22 46h2v2h-2zM74 46h2v2h-2zM78 46h2v2h-2zM80 46h2v2h-2zM84 46h2v2h-2zM86 46h2v2h-2zM88 46h2v2h-2zM92 46h2v2h-2zM10 48h2v2h-2zM38 48h2v2h-2zM56 48h2v2h-2zM74 48h2v2h-2zM132 48h2v2h-2zM148 48h2v2h-2zM66 50h2v2h-2zM80 50h2v2h-2zM82 50h2v2h-2zM126 50h2v2h-2zM134 50h2v2h-2zM152 50h2v2h-2zM6 52h2v2h-2zM22 52h2v2h-2zM62 52h2v2h-2zM144 52h2v2h-2zM10 54h2v2h-2zM126 54h2v2h-2zM86 56h2v2h-2zM88 56h2v2h-2zM114 56h2v2h-2zM120 56h2v2h-2zM134 56h2v2h-2zM138 56h2v2h-2zM152 56h2v2h-2zM12 58h2v2h-2zM74 58h2v2h-2zM76 58h2v2h-2zM84 58h2v2h-2zM88 58h2v2h-2zM2 60h2v2h-2zM22 60h2v2h-2zM56 60h2v2h-2zM80 60h2v2h-2zM86 60h2v2h-2zM108 60h2v2h-2zM118 60h2v2h-2zM124 60h2v2h-2zM152 60h2v2h-2zM52 62h2v2h-2zM80 62h2v2h-2zM84 62h2v2h-2zM90 62h2v2h-2zM120 62h2v2h-2zM122 62h2v2h-2zM126 62h2v2h-2zM164 62h2v2h-2zM26 64h2v2h-2zM76 64h2v2h-2zM82 64h2v2h-2zM116 64h2v2h-2zM118 64h2v2h-2zM122 64h2v2h-2zM124 64h2v2h-2zM132 64h2v2h-2zM134 64h2v2h-2zM164 64h2v2h-2zM88 66h2v2h-2zM92 66h2v2h-2zM118 66h2v2h-2zM122 66h2v2h-2zM124 66h2v2h-2zM136 66h2v2h-2zM146 66h2v2h-2zM6 68h2v2h-2zM56 68h2v2h-2zM84 68h2v2h-2zM88 68h2v2h-2zM120 68h2v2h-2zM6 70h2v2h-2zM26 70h2v2h-2zM42 70h2v2h-2zM52 70h2v2h-2zM80 70h2v2h-2zM84 70h2v2h-2zM88 70h2v2h-2zM98 70h2v2h-2zM100 70h2v2h-2zM102 70h2v2h-2zM110 70h2v2h-2zM118 70h2v2h-2zM122 70h2v2h-2zM124 70h2v2h-2zM132 70h2v2h-2zM136 70h2v2h-2zM146 70h2v2h-2zM56 72h2v2h-2zM86 72h2v2h-2zM88 72h2v2h-2zM104 72h2v2h-2zM118 72h2v2h-2zM130 72h2v2h-2zM136 72h2v2h-2zM138 72h2v2h-2zM142 72h2v2h-2zM26 74h2v2h-2zM110 74h2v2h-2zM118 74h2v2h-2zM120 74h2v2h-2zM138 74h2v2h-2zM20 76h2v2h-2zM26 76h2v2h-2zM28 76h2v2h-2zM32 76h2v2h-2zM42 76h2v2h-2zM104 76h2v2h-2zM130 76h2v2h-2zM134 76h2v2h-2zM136 76h2v2h-2zM8 78h2v2h-2zM18 78h2v2h-2zM38 78h2v2h-2zM42 78h2v2h-2zM62 78h2v2h-2zM130 78h2v2h-2zM132 78h2v2h-2zM28 80h2v2h-2zM30 80h2v2h-2zM32 80h2v2h-2zM48 80h2v2h-2zM66 80h2v2h-2zM82 80h2v2h-2zM130 80h2v2h-2zM136 80h2v2h-2zM28 82h2v2h-2zM32 82h2v2h-2zM34 82h2v2h-2zM38 82h2v2h-2zM54 82h2v2h-2zM142 82h2v2h-2zM158 82h2v2h-2zM20 84h2v2h-2zM28 84h2v2h-2zM34 84h2v2h-2zM36 84h2v2h-2zM40 84h2v2h-2zM42 84h2v2h-2zM66 84h2v2h-2zM90 84h2v2h-2zM130 84h2v2h-2zM12 86h2v2h-2zM28 86h2v2h-2zM30 86h2v2h-2zM32 86h2v2h-2zM36 86h2v2h-2zM48 86h2v2h-2zM94 86h2v2h-2zM142 86h2v2h-2z"/>
<path fill="rgb(30,130,130)" d="M18 0h2v2h-2zM98 0h2v2h-2zM118 0h2v2h-2zM14 2h2v2h-2zM20 2h2v2h-2zM22 2h2v2h-2zM26 2h2v2h-2zM90 2h2v2h-2zM156 2h2v2h-2zM162 2h2v2h-2zM4 4h2v2h-2zM86 4h2v2h-2zM144 4h2v2h-2zM148 4h2v2h-2zM12 6h2v2h-2zM36 6h2v2h-2zM52 6h2v2h-2zM160 6h2v2h-2zM36 8h2v2h-2zM84 8h2v2h-2zM100 8h2v2h-2zM134 8h2v2h-2zM136 8h2v2h-2zM152 8h2v2h-2zM154 10h2v2h-2zM42 12h2v2h-2zM54 12h2v2h-2zM148 12h2v2h-2zM68 14h2v2h-2zM116 14h2v2h-2zM132 14h2v2h-2zM134 14h2v2h-2zM152 14h2v2h-2zM162 14h2v2h-2zM6 16h2v2h-2zM116 16h2v2h-2zM148 16h2v2h-2zM150 16h2v2h-2zM8 18h2v2h-2zM74 18h2v2h-2zM144 18h2v2h-2zM152 18h2v2h-2zM160 18h2v2h-2zM2 20h2v2h-2zM16 20h2v2h-2zM20 20h2v2h-2zM24 20h2v2h-2zM72 20h2v2h-2zM84 20h2v2h-2zM90 20h2v2h-2zM116 20h2v2h-2zM154 20h2v2h-2zM12 22h2v2h-2zM18 22h2v2h-2zM20 22h2v2h-2zM22 22h2v2h-2zM80 22h2v2h-2zM86 22h2v2h-2zM134 22h2v2h-2zM154 22h2v2h-2zM156 22h2v2h-2zM18 24h2v2h-2zM102 24h2v2h-2zM132 24h2v2h-2zM166 24h2v2h-2zM16 26h2v2h-2zM22 26h2v2h-2zM50 26h2v2h-2zM64 26h2v2h-2zM88 26h2v2h-2zM98 26h2v2h-2zM106 26h2v2h-2zM152 26h2v2h-2zM154 26h2v2h-2zM158 26h2v2h-2zM16 28h2v2h-2zM42 28h2v2h-2zM44 28h2v2h-2zM46 28h2v2h-2zM50 28h2v2h-2zM52 28h2v2h-2zM108 28h2v2h-2zM150 28h2v2h-2zM154 28h2v2h-2zM14 30h2v2h-2zM22 30h2v2h-2zM40 30h2v2h-2zM42 30h2v2h-2zM54 30h2v2h-2zM84 30h2v2h-2zM88 30h2v2h-2zM104 30h2v2h-2zM108 30h2v2h-2zM150 30h2v2h-2zM156 30h2v2h-2zM2 32h2v2h-2zM18 32h2v2h-2zM32 32h2v2h-2zM36 32h2v2h-2zM40 32h2v2h-2zM72 32h2v2h-2zM98 32h2v2h-2zM100 32h2v2h-2zM102 32h2v2h-2zM104 32h2v2h-2zM108 32h2v2h-2zM152 32h2v2h-2zM154 32h2v2h-2zM160 32h2v2h-2zM38 34h2v2h-2zM46 34h2v2h-2zM48 34h2v2h-2zM50 34h2v2h-2zM56 34h2v2h-2zM104 34h2v2h-2zM150 34h2v2h-2zM2 36h2v2h-2zM44 36h2v2h-2zM46 36h2v2h-2zM48 36h2v2h-2zM50 36h2v2h-2zM104 36h2v2h-2zM106 36h2v2h-2zM108 36h2v2h-2zM112 36h2v2h-2zM152 36h2v2h-2zM160 36h2v2h-2zM42 38h2v2h-2zM48 38h2v2h-2zM50 38h2v2h-2zM70 38h2v2h-2zM100 38h2v2h-2zM102 38h2v2h-2zM104 38h2v2h-2zM144 38h2v2h-2zM156 38h2v2h-2zM8 40h2v2h-2zM40 40h2v2h-2zM44 40h2v2h-2zM86 40h2v2h-2zM96 40h2v2h-2zM102 40h2v2h-2zM150 40h2v2h-2zM156 40h2v2h-2zM160 40h2v2h-2zM74 42h2v2h-2zM86 42h2v2h-2zM96 42h2v2h-2zM102 42h2v2h-2zM16 44h2v2h-2zM34 44h2v2h-2zM88 44h2v2h-2zM112 44h2v2h-2zM114 44h2v2h-2zM150 44h2v2h-2zM154 44h2v2h-2zM158 44h2v2h-2zM30 46h2v2h-2zM44 46h2v2h-2zM66 46h2v2h-2zM136 46h2v2h-2zM146 46h2v2h-2zM64 48h2v2h-2zM84 48h2v2h-2zM144 48h2v2h-2zM28 50h2v2h-2zM32 50h2v2h-2zM34 50h2v2h-2zM42 50h2v2h-2zM56 50h2v2h-2zM62 50h2v2h-2zM90 50h2v2h-2zM136 50h2v2h-2zM146 50h2v2h-2zM34 52h2v2h-2zM36 52h2v2h-2zM40 52h2v2h-2zM56 52h2v2h-2zM70 52h2v2h-2zM72 52h2v2h-2zM112 52h2v2h-2zM42 54h2v2h-2zM58 54h2v2h-2zM84 54h2v2h-2zM92 54h2v2h-2zM124 54h2v2h-2zM158 54h2v2h-2zM6 56h2v2h-2zM24 56h2v2h-2zM26 56h2v2h-2zM30 56h2v2h-2zM36 56h2v2h-2zM58 56h2v2h-2zM62 56h2v2h-2zM66 56h2v2h-2zM92 56h2v2h-2zM110 56h2v2h-2zM128 56h2v2h-2zM32 58h2v2h-2zM56 58h2v2h-2zM72 58h2v2h-2zM100 58h2v2h-2zM106 58h2v2h-2zM118 58h2v2h-2zM128 58h2v2h-2zM0 60h2v2h-2zM14 60h2v2h-2zM24 60h2v2h-2zM32 60h2v2h-2zM36 60h2v2h-2zM38 60h2v2h-2zM70 60h2v2h-2zM90 60h2v2h-2zM32 62h2v2h-2zM64 62h2v2h-2zM66 62h2v2h-2zM92 62h2v2h-2zM98 62h2v2h-2zM100 62h2v2h-2zM108 62h2v2h-2zM132 62h2v2h-2zM138 62h2v2h-2zM18 64h2v2h-2zM38 64h2v2h-2zM42 64h2v2h-2zM84 64h2v2h-2zM86 64h2v2h-2zM94 64h2v2h-2zM96 64h2v2h-2zM128 64h2v2h-2zM130 64h2v2h-2zM138 64h2v2h-2zM152 64h2v2h-2zM58 66h2v2h-2zM84 66h2v2h-2zM86 66h2v2h-2zM94 66h2v2h-2zM102 66h2v2h-2zM40 68h2v2h-2zM62 68h2v2h-2zM74 68h2v2h-2zM86 68h2v2h-2zM92 68h2v2h-2zM96 68h2v2h-2zM102 68h2v2h-2zM132 68h2v2h-2zM138 68h2v2h-2zM148 68h2v2h-2zM150 68h2v2h-2zM170 68h2v2h-2zM28 70h2v2h-2zM32 70h2v2h-2zM82 70h2v2h-2zM86 70h2v2h-2zM90 70h2v2h-2zM92 70h2v2h-2zM96 70h2v2h-2zM128 70h2v2h-2zM130 70h2v2h-2zM80 72h2v2h-2zM82 72h2v2h-2zM84 72h2v2h-2zM96 72h2v2h-2zM100 72h2v2h-2zM124 72h2v2h-2zM126 72h2v2h-2zM10 74h2v2h-2zM66 74h2v2h-2zM82 74h2v2h-2zM84 74h2v2h-2zM86 74h2v2h-2zM88 74h2v2h-2zM90 74h2v2h-2zM94 74h2v2h-2zM100 74h2v2h-2zM36 76h2v2h-2zM72 76h2v2h-2zM78 76h2v2h-2zM84 76h2v2h-2zM90 76h2v2h-2zM96 76h2v2h-2zM98 76h2v2h-2zM100 76h2v2h-2zM150 76h2v2h-2zM76 78h2v2h-2zM84 78h2v2h-2zM90 78h2v2h-2zM94 78h2v2h-2zM98 78h2v2h-2zM168 78h2v2h-2zM80 80h2v2h-2zM90 80h2v2h-2zM98 80h2v2h-2zM162 80h2v2h-2zM164 80h2v2h-2zM16 82h2v2h-2zM78 82h2v2h-2zM94 82h2v2h-2zM100 82h2v2h-2zM148 82h2v2h-2zM86 84h2v2h-2zM88 84h2v2h-2zM128 84h2v2h-2zM132 84h2v2h-2zM168 84h2v2h-2zM84 86h2v2h-2zM124 86h2v2h-2z"/>
<path fill="rgb(160,110,60)" d="M22 0h2v2h-2zM24 0h2v2h-2zM34 0h2v2h-2zM40 0h2v2h-2zM140 0h2v2h-2zM142 0h2v2h-2zM146 0h2v2h-2zM152 0h2v2h-2zM154 0h2v2h-2zM156 0h2v2h-2zM162 0h2v2h-2zM4 2h2v2h-2zM16 2h2v2h-2zM18 2h2v2h-2zM134 2h2v2h-2zM144 2h2v2h-2zM146 2h2v2h-2zM148 2h2v2h-2zM150 2h2v2h-2zM154 2h2v2h-2zM158 2h2v2h-2zM160 2h2v2h-2zM18 4h2v2h-2zM22 4h2v2h-2zM24 4h2v2h-2zM26 4h2v2h-2zM32 4h2v2h-2zM50 4h2v2h-2zM116 4h2v2h-2zM138 4h2v2h-2zM150 4h2v2h-2zM154 4h2v2h-2zM156 4h2v2h-2zM158 4h2v2h-2zM162 4h2v2h-2zM0 6h2v2h-2zM2 6h2v2h-2zM20 6h2v2h-2zM24 6h2v2h-2zM26 6h2v2h-2zM28 6h2v2h-2zM62 6h2v2h-2zM72 6h2v2h-2zM86 6h2v2h-2zM96 6h2v2h-2zM106 6h2v2h-2zM110 6h2v2h-2zM112 6h2v2h-2zM124 6h2v2h-2zM148 6h2v2h-2zM152 6h2v2h-2zM164 6h2v2h-2zM166 6h2v2h-2zM8 8h2v2h-2zM10 8h2v2h-2zM16 8h2v2h-2zM24 8h2v2h-2zM26 8h2v2h-2zM32 8h2v2h-2zM66 8h2v2h-2zM92 8h2v2h-2zM94 8h2v2h-2zM104 8h2v2h-2zM142 8h2v2h-2zM144 8h2v2h-2zM146 8h2v2h-2zM148 8h2v2h-2zM154 8h2v2h-2zM158 8h2v2h-2zM160 8h2v2h-2zM162 8h2v2h-2zM4 10h2v2h-2zM24 10h2v2h-2zM26 10h2v2h-2zM38 10h2v2h-2zM46 10h2v2h-2zM48 10h2v2h-2zM72 10h2v2h-2zM98 10h2v2h-2zM138 10h2v2h-2zM140 10h2v2h-2zM144 10h2v2h-2zM150 10h2v2h-2zM152 10h2v2h-2zM164 10h2v2h-2zM166 10h2v2h-2zM8 12h2v2h-2zM34 12h2v2h-2zM86 12h2v2h-2zM88 12h2v2h-2zM92 12h2v2h-2zM96 12h2v2h-2zM100 12h2v2h-2zM152 12h2v2h-2zM154 12h2v2h-2zM156 12h2v2h-2zM158 12h2v2h-2zM164 12h2v2h-2zM170 12h2v2h-2zM2 14h2v2h-2zM4 14h2v2h-2zM10 14h2v2h-2zM14 14h2v2h-2zM86 14h2v2h-2zM96 14h2v2h-2zM100 14h2v2h-2zM150 14h2v2h-2zM158 14h2v2h-2zM160 14h2v2h-2zM170 14h2v2h-2zM0 16h2v2h-2zM2 16h2v2h-2zM12 16h2v2h-2zM52 16h2v2h-2zM54 16h2v2h-2zM62 16h2v2h-2zM66 16h2v2h-2zM92 16h2v2h-2zM94 16h2v2h-2zM102 16h2v2h-2zM122 16h2v2h-2zM158 16h2v2h-2zM162 16h2v2h-2zM172 16h2v2h-2zM2 18h2v2h-2zM92 18h2v2h-2zM100 18h2v2h-2zM102 18h2v2h-2zM114 18h2v2h-2zM162 18h2v2h-2zM164 18h2v2h-2zM0 20h2v2h-2zM4 20h2v2h-2zM160 20h2v2h-2zM162 20h2v2h-2zM30 22h2v2h-2zM40 22h2v2h-2zM120 22h2v2h-2zM162 22h2v2h-2zM164 22h2v2h-2zM136 24h2v2h-2zM138 24h2v2h-2zM158 24h2v2h-2zM168 24h2v2h-2zM6 26h2v2h-2zM8 26h2v2h-2zM62 26h2v2h-2zM92 26h2v2h-2zM102 26h2v2h-2zM160 26h2v2h-2zM112 30h2v2h-2zM160 30h2v2h-2zM106 32h2v2h-2zM132 32h2v2h-2zM12 34h2v2h-2zM44 34h2v2h-2zM66 34h2v2h-2zM58 36h2v2h-2zM62 36h2v2h-2zM98 36h2v2h-2zM110 36h2v2h-2zM126 36h2v2h-2zM0 38h2v2h-2zM8 38h2v2h-2zM52 38h2v2h-2zM86 38h2v2h-2zM118 38h2v2h-2zM152 38h2v2h-2zM46 40h2v2h-2zM50 40h2v2h-2zM92 40h2v2h-2zM126 40h2v2h-2zM144 40h2v2h-2zM0 42h2v2h-2zM6 42h2v2h-2zM8 42h2v2h-2zM10 42h2v2h-2zM44 42h2v2h-2zM48 42h2v2h-2zM54 42h2v2h-2zM124 42h2v2h-2zM0 44h2v2h-2zM6 44h2v2h-2zM10 44h2v2h-2zM14 44h2v2h-2zM48 44h2v2h-2zM52 44h2v2h-2zM60 44h2v2h-2zM70 44h2v2h-2zM74 44h2v2h-2zM136 44h2v2h-2zM0 46h2v2h-2zM6 46h2v2h-2zM8 46h2v2h-2zM10 46h2v2h-2zM12 46h2v2h-2zM72 46h2v2h-2zM0 48h2v2h-2zM4 48h2v2h-2zM8 48h2v2h-2zM14 48h2v2h-2zM30 48h2v2h-2zM52 48h2v2h-2zM54 48h2v2h-2zM58 48h2v2h-2zM60 48h2v2h-2zM70 48h2v2h-2zM76 48h2v2h-2zM78 48h2v2h-2zM82 48h2v2h-2zM4 50h2v2h-2zM6 50h2v2h-2zM60 50h2v2h-2zM70 50h2v2h-2zM72 50h2v2h-2zM76 50h2v2h-2zM112 50h2v2h-2zM158 50h2v2h-2zM8 52h2v2h-2zM38 52h2v2h-2zM46 52h2v2h-2zM74 52h2v2h-2zM78 52h2v2h-2zM84 52h2v2h-2zM98 52h2v2h-2zM106 52h2v2h-2zM146 52h2v2h-2zM156 52h2v2h-2zM158 52h2v2h-2zM166 52h2v2h-2zM0 54h2v2h-2zM14 54h2v2h-2zM32 54h2v2h-2zM64 54h2v2h-2zM74 54h2v2h-2zM76 54h2v2h-2zM80 54h2v2h-2zM112 54h2v2h-2zM114 54h2v2h-2zM120 54h2v2h-2zM142 54h2v2h-2zM168 54h2v2h-2zM10 56h2v2h-2zM12 56h2v2h-2zM40 56h2v2h-2zM68 56h2v2h-2zM70 56h2v2h-2zM74 56h2v2h-2zM76 56h2v2h-2zM82 56h2v2h-2zM84 56h2v2h-2zM126 56h2v2h-2zM140 56h2v2h-2zM168 56h2v2h-2zM170 56h2v2h-2zM20 58h2v2h-2zM24 58h2v2h-2zM34 58h2v2h-2zM68 58h2v2h-2zM86 58h2v2h-2zM116 58h2v2h-2zM138 58h2v2h-2zM142 58h2v2h-2zM170 58h2v2h-2zM16 60h2v2h-2zM20 60h2v2h-2zM34 60h2v2h-2zM66 60h2v2h-2zM68 60h2v2h-2zM76 60h2v2h-2zM78 60h2v2h-2zM100 60h2v2h-2zM114 60h2v2h-2zM116 60h2v2h-2zM126 60h2v2h-2zM134 60h2v2h-2zM142 60h2v2h-2zM144 60h2v2h-2zM162 60h2v2h-2zM10 62h2v2h-2zM12 62h2v2h-2zM14 62h2v2h-2zM16 62h2v2h-2zM18 62h2v2h-2zM22 62h2v2h-2zM24 62h2v2h-2zM26 62h2v2h-2zM40 62h2v2h-2zM68 62h2v2h-2zM82 62h2v2h-2zM112 62h2v2h-2zM114 62h2v2h-2zM116 62h2v2h-2zM130 62h2v2h-2zM136 62h2v2h-2zM140 62h2v2h-2zM146 62h2v2h-2zM160 62h2v2h-2zM170 62h2v2h-2zM0 64h2v2h-2zM8 64h2v2h-2zM14 64h2v2h-2zM22 64h2v2h-2zM72 64h2v2h-2zM92 64h2v2h-2zM144 64h2v2h-2zM162 64h2v2h-2zM2 66h2v2h-2zM16 66h2v2h-2zM20 66h2v2h-2zM22 66h2v2h-2zM28 66h2v2h-2zM30 66h2v2h-2zM74 66h2v2h-2zM90 66h2v2h-2zM116 66h2v2h-2zM134 66h2v2h-2zM138 66h2v2h-2zM140 66h2v2h-2zM142 66h2v2h-2zM150 66h2v2h-2zM154 66h2v2h-2zM164 66h2v2h-2zM166 66h2v2h-2zM170 66h2v2h-2zM22 68h2v2h-2zM26 68h2v2h-2zM34 68h2v2h-2zM42 68h2v2h-2zM48 68h2v2h-2zM70 68h2v2h-2zM100 68h2v2h-2zM114 68h2v2h-2zM116 68h2v2h-2zM122 68h2v2h-2zM142 68h2v2h-2zM14 70h2v2h-2zM20 70h2v2h-2zM24 70h2v2h-2zM76 70h2v2h-2zM116 70h2v2h-2zM120 70h2v2h-2zM142 70h2v2h-2zM152 70h2v2h-2zM160 70h2v2h-2zM162 70h2v2h-2zM166 70h2v2h-2zM106 72h2v2h-2zM110 72h2v2h-2zM116 72h2v2h-2zM128 72h2v2h-2zM132 72h2v2h-2zM158 72h2v2h-2zM166 72h2v2h-2zM54 74h2v2h-2zM122 74h2v2h-2zM124 74h2v2h-2zM126 74h2v2h-2zM128 74h2v2h-2zM160 74h2v2h-2zM166 74h2v2h-2zM170 74h2v2h-2zM46 76h2v2h-2zM50 76h2v2h-2zM80 76h2v2h-2zM124 76h2v2h-2zM132 76h2v2h-2zM6 78h2v2h-2zM12 78h2v2h-2zM36 78h2v2h-2zM40 78h2v2h-2zM44 78h2v2h-2zM56 78h2v2h-2zM64 78h2v2h-2zM70 78h2v2h-2zM100 78h2v2h-2zM106 78h2v2h-2zM124 78h2v2h-2zM128 78h2v2h-2zM134 78h2v2h-2zM42 80h2v2h-2zM50 80h2v2h-2zM54 80h2v2h-2zM56 80h2v2h-2zM62 80h2v2h-2zM70 80h2v2h-2zM72 80h2v2h-2zM94 80h2v2h-2zM118 80h2v2h-2zM44 82h2v2h-2zM50 82h2v2h-2zM56 82h2v2h-2zM58 82h2v2h-2zM60 82h2v2h-2zM62 82h2v2h-2zM68 82h2v2h-2zM70 82h2v2h-2zM72 82h2v2h-2zM74 82h2v2h-2zM76 82h2v2h-2zM88 82h2v2h-2zM98 82h2v2h-2zM104 82h2v2h-2zM122 82h2v2h-2zM126 82h2v2h-2zM150 82h2v2h-2zM162 82h2v2h-2zM166 82h2v2h-2zM14 84h2v2h-2zM46 84h2v2h-2zM48 84h2v2h-2zM50 84h2v2h-2zM54 84h2v2h-2zM56 84h2v2h-2zM62 84h2v2h-2zM64 84h2v2h-2zM70 84h2v2h-2zM72 84h2v2h-2zM74 84h2v2h-2zM78 84h2v2h-2zM82 84h2v2h-2zM84 84h2v2h-2zM102 84h2v2h-2zM106 84h2v2h-2zM108 84h2v2h-2zM110 84h2v2h-2zM112 84h2v2h-2zM156 84h2v2h-2zM38 86h2v2h-2zM40 86h2v2h-2zM42 86h2v2h-2zM46 86h2v2h-2zM52 86h2v2h-2zM56 86h2v2h-2zM62 86h2v2h-2zM64 86h2v2h-2zM66 86h2v2h-2zM70 86h2v2h-2zM74 86h2v2h-2zM100 86h2v2h-2zM104 86h2v2h-2zM114 86h2v2h-2zM118 86h2v2h-2zM134 86h2v2h-2z"/>
<path fill="rgb(50,70,170)" d="M28 0h2v2h-2zM76 0h2v2h-2zM168 0h2v2h-2zM44 2h2v2h-2zM94 2h2v2h-2zM164 2h2v2h-2zM68 4h2v2h-2zM98 4h2v2h-2zM122 4h2v2h-2zM16 6h2v2h-2zM44 6h2v2h-2zM80 6h2v2h-2zM94 6h2v2h-2zM142 6h2v2h-2zM154 6h2v2h-2zM168 6h2v2h-2zM68 8h2v2h-2zM84 10h2v2h-2zM92 10h2v2h-2zM2 12h2v2h-2zM106 12h2v2h-2zM30 14h2v2h-2zM32 14h2v2h-2zM64 14h2v2h-2zM118 14h2v2h-2zM166 14h2v2h-2zM168 14h2v2h-2zM34 16h2v2h-2zM106 16h2v2h-2zM152 16h2v2h-2zM168 16h2v2h-2zM170 16h2v2h-2zM78 18h2v2h-2zM88 18h2v2h-2zM96 18h2v2h-2zM132 18h2v2h-2zM158 18h2v2h-2zM166 18h2v2h-2zM92 20h2v2h-2zM96 20h2v2h-2zM100 20h2v2h-2zM164 20h2v2h-2zM166 20h2v2h-2zM168 20h2v2h-2zM24 22h2v2h-2zM152 22h2v2h-2zM160 22h2v2h-2zM166 22h2v2h-2zM168 22h2v2h-2zM8 24h2v2h-2zM14 24h2v2h-2zM126 24h2v2h-2zM150 24h2v2h-2zM160 24h2v2h-2zM24 26h2v2h-2zM44 26h2v2h-2zM70 26h2v2h-2zM90 26h2v2h-2zM110 26h2v2h-2zM136 26h2v2h-2zM146 26h2v2h-2zM170 26h2v2h-2zM8 28h2v2h-2zM14 28h2v2h-2zM18 28h2v2h-2zM36 28h2v2h-2zM64 28h2v2h-2zM104 28h2v2h-2zM110 28h2v2h-2zM124 28h2v2h-2zM162 28h2v2h-2zM166 28h2v2h-2zM2 30h2v2h-2zM4 30h2v2h-2zM16 30h2v2h-2zM20 30h2v2h-2zM32 30h2v2h-2zM94 30h2v2h-2zM120 30h2v2h-2zM140 30h2v2h-2zM142 30h2v2h-2zM146 30h2v2h-2zM170 30h2v2h-2zM0 32h2v2h-2zM8 32h2v2h-2zM10 32h2v2h-2zM20 32h2v2h-2zM22 32h2v2h-2zM56 32h2v2h-2zM118 32h2v2h-2zM124 32h2v2h-2zM170 32h2v2h-2zM2 34h2v2h-2zM4 34h2v2h-2zM16 34h2v2h-2zM24 34h2v2h-2zM26 34h2v2h-2zM122 34h2v2h-2zM124 34h2v2h-2zM128 34h2v2h-2zM144 34h2v2h-2zM154 34h2v2h-2zM0 36h2v2h-2zM8 36h2v2h-2zM18 36h2v2h-2zM20 36h2v2h-2zM26 36h2v2h-2zM28 36h2v2h-2zM92 36h2v2h-2zM122 36h2v2h-2zM124 36h2v2h-2zM136 36h2v2h-2zM140 36h2v2h-2zM144 36h2v2h-2zM146 36h2v2h-2zM148 36h2v2h-2zM154 36h2v2h-2zM162 36h2v2h-2zM166 36h2v2h-2zM2 38h2v2h-2zM4 38h2v2h-2zM6 38h2v2h-2zM10 38h2v2h-2zM18 38h2v2h-2zM24 38h2v2h-2zM28 38h2v2h-2zM44 38h2v2h-2zM62 38h2v2h-2zM80 38h2v2h-2zM84 38h2v2h-2zM92 38h2v2h-2zM114 38h2v2h-2zM122 38h2v2h-2zM124 38h2v2h-2zM138 38h2v2h-2zM158 38h2v2h-2zM162 38h2v2h-2zM4 40h2v2h-2zM14 40h2v2h-2zM42 40h2v2h-2zM48 40h2v2h-2zM62 40h2v2h-2zM72 40h2v2h-2zM124 40h2v2h-2zM130 40h2v2h-2zM140 40h2v2h-2zM142 40h2v2h-2zM146 40h2v2h-2zM148 40h2v2h-2zM162 40h2v2h-2zM170 40h2v2h-2zM4 42h2v2h-2zM16 42h2v2h-2zM24 42h2v2h-2zM42 42h2v2h-2zM46 42h2v2h-2zM50 42h2v2h-2zM68 42h2v2h-2zM144 42h2v2h-2zM146 42h2v2h-2zM148 42h2v2h-2zM154 42h2v2h-2zM156 42h2v2h-2zM164 42h2v2h-2zM168 42h2v2h-2zM170 42h2v2h-2zM12 44h2v2h-2zM22 44h2v2h-2zM38 44h2v2h-2zM40 44h2v2h-2zM42 44h2v2h-2zM50 44h2v2h-2zM54 44h2v2h-2zM142 44h2v2h-2zM146 44h2v2h-2zM148 44h2v2h-2zM162 44h2v2h-2zM164 44h2v2h-2zM166 44h2v2h-2zM28 46h2v2h-2zM34 46h2v2h-2zM46 46h2v2h-2zM48 46h2v2h-2zM50 46h2v2h-2zM54 46h2v2h-2zM56 46h2v2h-2zM100 46h2v2h-2zM126 46h2v2h-2zM156 46h2v2h-2zM164 46h2v2h-2zM168 46h2v2h-2zM172 46h2v2h-2zM6 48h2v2h-2zM12 48h2v2h-2zM94 48h2v2h-2zM104 48h2v2h-2zM108 48h2v2h-2zM142 48h2v2h-2zM152 48h2v2h-2zM160 48h2v2h-2zM162 48h2v2h-2zM2 50h2v2h-2zM8 50h2v2h-2zM38 50h2v2h-2zM44 50h2v2h-2zM86 50h2v2h-2zM106 50h2v2h-2zM140 50h2v2h-2zM148 50h2v2h-2zM150 50h2v2h-2zM160 50h2v2h-2zM0 52h2v2h-2zM2 52h2v2h-2zM4 52h2v2h-2zM54 52h2v2h-2zM58 52h2v2h-2zM60 52h2v2h-2zM76 52h2v2h-2zM104 52h2v2h-2zM132 52h2v2h-2zM140 52h2v2h-2zM142 52h2v2h-2zM150 52h2v2h-2zM152 52h2v2h-2zM154 52h2v2h-2zM162 52h2v2h-2zM164 52h2v2h-2zM6 54h2v2h-2zM40 54h2v2h-2zM44 54h2v2h-2zM48 54h2v2h-2zM50 54h2v2h-2zM62 54h2v2h-2zM70 54h2v2h-2zM96 54h2v2h-2zM98 54h2v2h-2zM100 54h2v2h-2zM106 54h2v2h-2zM108 54h2v2h-2zM152 54h2v2h-2zM154 54h2v2h-2zM164 54h2v2h-2zM18 56h2v2h-2zM20 56h2v2h-2zM42 56h2v2h-2zM54 56h2v2h-2zM56 56h2v2h-2zM100 56h2v2h-2zM104 56h2v2h-2zM112 56h2v2h-2zM154 56h2v2h-2zM156 56h2v2h-2zM162 56h2v2h-2zM0 58h2v2h-2zM4 58h2v2h-2zM6 58h2v2h-2zM30 58h2v2h-2zM38 58h2v2h-2zM52 58h2v2h-2zM54 58h2v2h-2zM58 58h2v2h-2zM60 58h2v2h-2zM62 58h2v2h-2zM64 58h2v2h-2zM66 58h2v2h-2zM82 58h2v2h-2zM96 58h2v2h-2zM112 58h2v2h-2zM122 58h2v2h-2zM134 58h2v2h-2zM146 58h2v2h-2zM160 58h2v2h-2zM4 60h2v2h-2zM8 60h2v2h-2zM28 60h2v2h-2zM54 60h2v2h-2zM62 60h2v2h-2zM102 60h2v2h-2zM104 60h2v2h-2zM160 60h2v2h-2zM6 62h2v2h-2zM30 62h2v2h-2zM34 62h2v2h-2zM56 62h2v2h-2zM58 62h2v2h-2zM118 62h2v2h-2zM144 62h2v2h-2zM150 62h2v2h-2zM154 62h2v2h-2zM158 62h2v2h-2zM12 64h2v2h-2zM20 64h2v2h-2zM30 64h2v2h-2zM32 64h2v2h-2zM36 64h2v2h-2zM40 64h2v2h-2zM58 64h2v2h-2zM62 64h2v2h-2zM66 64h2v2h-2zM98 64h2v2h-2zM100 64h2v2h-2zM140 64h2v2h-2zM156 64h2v2h-2zM158 64h2v2h-2zM160 64h2v2h-2zM0 66h2v2h-2zM32 66h2v2h-2zM36 66h2v2h-2zM38 66h2v2h-2zM46 66h2v2h-2zM64 66h2v2h-2zM66 66h2v2h-2zM68 66h2v2h-2zM70 66h2v2h-2zM72 66h2v2h-2zM110 66h2v2h-2zM130 66h2v2h-2zM132 66h2v2h-2zM18 68h2v2h-2zM46 68h2v2h-2zM54 68h2v2h-2zM80 68h2v2h-2zM106 68h2v2h-2zM48 70h2v2h-2zM58 70h2v2h-2zM68 70h2v2h-2zM70 70h2v2h-2zM112 70h2v2h-2zM134 70h2v2h-2zM38 72h2v2h-2zM50 72h2v2h-2zM54 72h2v2h-2zM90 72h2v2h-2zM92 72h2v2h-2zM102 72h2v2h-2zM172 72h2v2h-2zM52 74h2v2h-2zM74 74h2v2h-2zM76 74h2v2h-2zM78 74h2v2h-2zM96 74h2v2h-2zM98 74h2v2h-2zM136 74h2v2h-2zM6 76h2v2h-2zM48 76h2v2h-2zM52 76h2v2h-2zM54 76h2v2h-2zM56 76h2v2h-2zM58 76h2v2h-2zM120 76h2v2h-2zM138 76h2v2h-2zM156 76h2v2h-2zM22 78h2v2h-2zM58 78h2v2h-2zM96 78h2v2h-2zM104 78h2v2h-2zM156 78h2v2h-2zM164 78h2v2h-2zM22 80h2v2h-2zM92 80h2v2h-2zM96 80h2v2h-2zM116 80h2v2h-2zM128 80h2v2h-2zM24 82h2v2h-2zM52 82h2v2h-2zM96 82h2v2h-2zM102 82h2v2h-2zM156 82h2v2h-2zM18 84h2v2h-2zM24 84h2v2h-2zM94 84h2v2h-2zM98 84h2v2h-2zM100 84h2v2h-2zM146 84h2v2h-2zM154 84h2v2h-2zM166 84h2v2h-2zM2 86h2v2h-2zM22 86h2v2h-2zM24 86h2v2h-2zM98 86h2v2h-2zM108 86h2v2h-2zM156 86h2v2h-2zM162 86h2v2h-2z"/>
<path fill="rgb(40,150,60)" d="M30 0h2v2h-2zM38 0h2v2h-2zM88 0h2v2h-2zM90 0h2v2h-2zM92 0h2v2h-2zM94 0h2v2h-2zM116 0h2v2h-2zM124 0h2v2h-2zM130 0h2v2h-2zM150 0h2v2h-2zM30 2h2v2h-2zM36 2h2v2h-2zM40 2h2v2h-2zM60 2h2v2h-2zM92 2h2v2h-2zM100 2h2v2h-2zM120 2h2v2h-2zM122 2h2v2h-2zM128 2h2v2h-2zM140 2h2v2h-2zM6 4h2v2h-2zM8 4h2v2h-2zM12 4h2v2h-2zM30 4h2v2h-2zM36 4h2v2h-2zM44 4h2v2h-2zM62 4h2v2h-2zM78 4h2v2h-2zM92 4h2v2h-2zM94 4h2v2h-2zM96 4h2v2h-2zM22 6h2v2h-2zM30 6h2v2h-2zM38 6h2v2h-2zM60 6h2v2h-2zM70 6h2v2h-2zM84 6h2v2h-2zM90 6h2v2h-2zM92 6h2v2h-2zM100 6h2v2h-2zM120 6h2v2h-2zM126 6h2v2h-2zM134 6h2v2h-2zM6 8h2v2h-2zM12 8h2v2h-2zM14 8h2v2h-2zM18 8h2v2h-2zM20 8h2v2h-2zM38 8h2v2h-2zM46 8h2v2h-2zM50 8h2v2h-2zM58 8h2v2h-2zM64 8h2v2h-2zM76 8h2v2h-2zM96 8h2v2h-2zM98 8h2v2h-2zM120 8h2v2h-2zM156 8h2v2h-2zM2 10h2v2h-2zM10 10h2v2h-2zM16 10h2v2h-2zM30 10h2v2h-2zM32 10h2v2h-2zM40 10h2v2h-2zM58 10h2v2h-2zM60 10h2v2h-2zM64 10h2v2h-2zM94 10h2v2h-2zM106 10h2v2h-2zM120 10h2v2h-2zM122 10h2v2h-2zM126 10h2v2h-2zM10 12h2v2h-2zM14 12h2v2h-2zM18 12h2v2h-2zM60 12h2v2h-2zM62 12h2v2h-2zM64 12h2v2h-2zM66 12h2v2h-2zM76 12h2v2h-2zM98 12h2v2h-2zM102 12h2v2h-2zM122 12h2v2h-2zM124 12h2v2h-2zM130 12h2v2h-2zM146 12h2v2h-2zM160 12h2v2h-2zM6 14h2v2h-2zM8 14h2v2h-2zM24 14h2v2h-2zM46 14h2v2h-2zM50 14h2v2h-2zM92 14h2v2h-2zM98 14h2v2h-2zM104 14h2v2h-2zM108 14h2v2h-2zM110 14h2v2h-2zM112 14h2v2h-2zM130 14h2v2h-2zM138 14h2v2h-2zM142 14h2v2h-2zM10 16h2v2h-2zM14 16h2v2h-2zM16 16h2v2h-2zM44 16h2v2h-2zM56 16h2v2h-2zM68 16h2v2h-2zM70 16h2v2h-2zM74 16h2v2h-2zM98 16h2v2h-2zM104 16h2v2h-2zM118 16h2v2h-2zM126 16h2v2h-2zM128 16h2v2h-2zM140 16h2v2h-2zM4 18h2v2h-2zM12 18h2v2h-2zM16 18h2v2h-2zM44 18h2v2h-2zM46 18h2v2h-2zM58 18h2v2h-2zM104 18h2v2h-2zM106 18h2v2h-2zM108 18h2v2h-2zM110 18h2v2h-2zM122 18h2v2h-2zM126 18h2v2h-2zM130 18h2v2h-2zM136 18h2v2h-2zM142 18h2v2h-2zM6 20h2v2h-2zM10 20h2v2h-2zM14 20h2v2h-2zM60 20h2v2h-2zM68 20h2v2h-2zM110 20h2v2h-2zM122 20h2v2h-2zM128 20h2v2h-2zM130 20h2v2h-2zM136 20h2v2h-2zM150 20h2v2h-2zM16 22h2v2h-2zM56 22h2v2h-2zM60 22h2v2h-2zM72 22h2v2h-2zM94 22h2v2h-2zM102 22h2v2h-2zM122 22h2v2h-2zM132 22h2v2h-2zM4 24h2v2h-2zM10 24h2v2h-2zM20 24h2v2h-2zM22 24h2v2h-2zM26 24h2v2h-2zM68 24h2v2h-2zM74 24h2v2h-2zM90 24h2v2h-2zM122 24h2v2h-2zM124 24h2v2h-2zM134 24h2v2h-2zM172 24h2v2h-2zM10 26h2v2h-2zM126 26h2v2h-2zM128 26h2v2h-2zM132 26h2v2h-2zM144 26h2v2h-2zM150 26h2v2h-2zM28 28h2v2h-2zM34 28h2v2h-2zM130 28h2v2h-2zM132 28h2v2h-2zM136 28h2v2h-2zM144 28h2v2h-2zM60 30h2v2h-2zM130 30h2v2h-2zM134 30h2v2h-2zM136 30h2v2h-2zM78 32h2v2h-2zM130 32h2v2h-2zM134 32h2v2h-2zM142 32h2v2h-2zM144 32h2v2h-2zM164 32h2v2h-2zM8 34h2v2h-2zM28 34h2v2h-2zM108 34h2v2h-2zM126 34h2v2h-2zM164 34h2v2h-2zM166 34h2v2h-2zM38 36h2v2h-2zM102 36h2v2h-2zM114 36h2v2h-2zM34 38h2v2h-2zM38 38h2v2h-2zM88 38h2v2h-2zM54 40h2v2h-2zM22 42h2v2h-2zM34 42h2v2h-2zM64 42h2v2h-2zM66 42h2v2h-2zM112 42h2v2h-2zM28 44h2v2h-2zM62 44h2v2h-2zM64 44h2v2h-2zM66 44h2v2h-2zM68 44h2v2h-2zM92 44h2v2h-2zM118 44h2v2h-2zM172 44h2v2h-2zM20 46h2v2h-2zM38 46h2v2h-2zM82 46h2v2h-2zM112 46h2v2h-2zM162 46h2v2h-2zM20 48h2v2h-2zM24 48h2v2h-2zM62 48h2v2h-2zM88 48h2v2h-2zM100 48h2v2h-2zM164 48h2v2h-2zM166 48h2v2h-2zM172 48h2v2h-2zM30 50h2v2h-2zM52 50h2v2h-2zM58 50h2v2h-2zM64 50h2v2h-2zM78 50h2v2h-2zM92 50h2v2h-2zM98 50h2v2h-2zM100 50h2v2h-2zM128 50h2v2h-2zM138 50h2v2h-2zM162 50h2v2h-2zM164 50h2v2h-2zM166 50h2v2h-2zM28 52h2v2h-2zM30 52h2v2h-2zM88 52h2v2h-2zM96 52h2v2h-2zM100 52h2v2h-2zM130 52h2v2h-2zM148 52h2v2h-2zM160 52h2v2h-2zM170 52h2v2h-2zM2 54h2v2h-2zM18 54h2v2h-2zM22 54h2v2h-2zM24 54h2v2h-2zM26 54h2v2h-2zM52 54h2v2h-2zM68 54h2v2h-2zM88 54h2v2h-2zM102 54h2v2h-2zM104 54h2v2h-2zM156 54h2v2h-2zM160 54h2v2h-2zM162 54h2v2h-2zM22 56h2v2h-2zM28 56h2v2h-2zM32 56h2v2h-2zM90 56h2v2h-2zM94 56h2v2h-2zM102 56h2v2h-2zM106 56h2v2h-2zM160 56h2v2h-2zM166 56h2v2h-2zM22 58h2v2h-2zM26 58h2v2h-2zM28 58h2v2h-2zM44 58h2v2h-2zM80 58h2v2h-2zM92 58h2v2h-2zM126 58h2v2h-2zM162 58h2v2h-2zM164 58h2v2h-2zM58 60h2v2h-2zM72 60h2v2h-2zM84 60h2v2h-2zM164 60h2v2h-2zM172 60h2v2h-2zM48 62h2v2h-2zM50 62h2v2h-2zM60 62h2v2h-2zM78 62h2v2h-2zM94 62h2v2h-2zM104 62h2v2h-2zM124 62h2v2h-2zM24 64h2v2h-2zM34 64h2v2h-2zM46 64h2v2h-2zM52 64h2v2h-2zM42 66h2v2h-2zM44 66h2v2h-2zM78 66h2v2h-2zM98 66h2v2h-2zM148 66h2v2h-2zM152 66h2v2h-2zM4 68h2v2h-2zM24 68h2v2h-2zM36 68h2v2h-2zM38 68h2v2h-2zM98 68h2v2h-2zM22 70h2v2h-2zM40 70h2v2h-2zM44 70h2v2h-2zM32 72h2v2h-2zM40 72h2v2h-2zM46 72h2v2h-2zM48 72h2v2h-2zM52 72h2v2h-2zM60 72h2v2h-2zM62 72h2v2h-2zM72 72h2v2h-2zM76 72h2v2h-2zM98 72h2v2h-2zM108 72h2v2h-2zM112 72h2v2h-2zM160 72h2v2h-2zM18 74h2v2h-2zM22 74h2v2h-2zM40 74h2v2h-2zM42 74h2v2h-2zM44 74h2v2h-2zM46 74h2v2h-2zM48 74h2v2h-2zM154 74h2v2h-2zM12 76h2v2h-2zM18 76h2v2h-2zM34 76h2v2h-2zM40 76h2v2h-2zM44 76h2v2h-2zM70 76h2v2h-2zM110 76h2v2h-2zM112 76h2v2h-2zM116 76h2v2h-2zM118 76h2v2h-2zM102 78h2v2h-2zM110 78h2v2h-2zM114 78h2v2h-2zM116 78h2v2h-2zM140 78h2v2h-2zM0 80h2v2h-2zM10 80h2v2h-2zM16 80h2v2h-2zM18 80h2v2h-2zM40 80h2v2h-2zM46 80h2v2h-2zM52 80h2v2h-2zM58 80h2v2h-2zM88 80h2v2h-2zM100 80h2v2h-2zM110 80h2v2h-2zM120 80h2v2h-2zM122 80h2v2h-2zM124 80h2v2h-2zM158 80h2v2h-2zM8 82h2v2h-2zM10 82h2v2h-2zM14 82h2v2h-2zM18 82h2v2h-2zM20 82h2v2h-2zM22 82h2v2h-2zM40 82h2v2h-2zM46 82h2v2h-2zM66 82h2v2h-2zM92 82h2v2h-2zM108 82h2v2h-2zM110 82h2v2h-2zM146 82h2v2h-2zM12 84h2v2h-2zM16 84h2v2h-2zM22 84h2v2h-2zM26 84h2v2h-2zM44 84h2v2h-2zM60 84h2v2h-2zM68 84h2v2h-2zM124 84h2v2h-2zM14 86h2v2h-2zM16 86h2v2h-2zM18 86h2v2h-2zM20 86h2v2h-2zM26 86h2v2h-2zM44 86h2v2h-2zM90 86h2v2h-2zM112 86h2v2h-2zM128 86h2v2h-2zM130 86h2v2h-2z"/>
<path fill="rgb(110,160,70)" d="M78 0h2v2h-2zM82 0h2v2h-2zM86 0h2v2h-2zM42 2h2v2h-2zM56 2h2v2h-2zM76 2h2v2h-2zM78 2h2v2h-2zM84 2h2v2h-2zM86 2h2v2h-2zM46 4h2v2h-2zM56 4h2v2h-2zM76 4h2v2h-2zM80 4h2v2h-2zM84 4h2v2h-2zM88 4h2v2h-2zM90 4h2v2h-2zM136 4h2v2h-2zM10 6h2v2h-2zM32 6h2v2h-2zM42 6h2v2h-2zM56 6h2v2h-2zM76 6h2v2h-2zM82 6h2v2h-2zM88 6h2v2h-2zM116 6h2v2h-2zM118 6h2v2h-2zM56 8h2v2h-2zM78 8h2v2h-2zM80 8h2v2h-2zM86 8h2v2h-2zM88 8h2v2h-2zM102 8h2v2h-2zM74 10h2v2h-2zM76 10h2v2h-2zM80 10h2v2h-2zM82 10h2v2h-2zM88 10h2v2h-2zM90 10h2v2h-2zM156 10h2v2h-2zM168 10h2v2h-2zM20 12h2v2h-2zM22 12h2v2h-2zM26 12h2v2h-2zM28 12h2v2h-2zM30 12h2v2h-2zM56 12h2v2h-2zM58 12h2v2h-2zM68 12h2v2h-2zM70 12h2v2h-2zM72 12h2v2h-2zM74 12h2v2h-2zM78 12h2v2h-2zM82 12h2v2h-2zM90 12h2v2h-2zM94 12h2v2h-2zM114 12h2v2h-2zM126 12h2v2h-2zM128 12h2v2h-2zM132 12h2v2h-2zM150 12h2v2h-2zM16 14h2v2h-2zM18 14h2v2h-2zM20 14h2v2h-2zM26 14h2v2h-2zM28 14h2v2h-2zM34 14h2v2h-2zM36 14h2v2h-2zM38 14h2v2h-2zM52 14h2v2h-2zM54 14h2v2h-2zM56 14h2v2h-2zM72 14h2v2h-2zM76 14h2v2h-2zM80 14h2v2h-2zM82 14h2v2h-2zM88 14h2v2h-2zM140 14h2v2h-2zM8 16h2v2h-2zM22 16h2v2h-2zM26 16h2v2h-2zM46 16h2v2h-2zM48 16h2v2h-2zM58 16h2v2h-2zM80 16h2v2h-2zM84 16h2v2h-2zM88 16h2v2h-2zM90 16h2v2h-2zM132 16h2v2h-2zM138 16h2v2h-2zM0 18h2v2h-2zM6 18h2v2h-2zM18 18h2v2h-2zM20 18h2v2h-2zM24 18h2v2h-2zM28 18h2v2h-2zM42 18h2v2h-2zM52 18h2v2h-2zM54 18h2v2h-2zM62 18h2v2h-2zM66 18h2v2h-2zM68 18h2v2h-2zM70 18h2v2h-2zM76 18h2v2h-2zM86 18h2v2h-2zM90 18h2v2h-2zM128 18h2v2h-2zM140 18h2v2h-2zM148 18h2v2h-2zM12 20h2v2h-2zM22 20h2v2h-2zM30 20h2v2h-2zM46 20h2v2h-2zM50 20h2v2h-2zM52 20h2v2h-2zM54 20h2v2h-2zM56 20h2v2h-2zM70 20h2v2h-2zM74 20h2v2h-2zM76 20h2v2h-2zM86 20h2v2h-2zM88 20h2v2h-2zM124 20h2v2h-2zM126 20h2v2h-2zM132 20h2v2h-2zM140 20h2v2h-2zM158 20h2v2h-2zM172 20h2v2h-2zM0 22h2v2h-2zM6 22h2v2h-2zM8 22h2v2h-2zM10 22h2v2h-2zM46 22h2v2h-2zM54 22h2v2h-2zM64 22h2v2h-2zM66 22h2v2h-2zM76 22h2v2h-2zM78 22h2v2h-2zM82 22h2v2h-2zM96 22h2v2h-2zM114 22h2v2h-2zM124 22h2v2h-2zM126 22h2v2h-2zM140 22h2v2h-2zM158 22h2v2h-2zM0 24h2v2h-2zM2 24h2v2h-2zM6 24h2v2h-2zM52 24h2v2h-2zM54 24h2v2h-2zM56 24h2v2h-2zM62 24h2v2h-2zM64 24h2v2h-2zM110 24h2v2h-2zM120 24h2v2h-2zM128 24h2v2h-2zM144 24h2v2h-2zM146 24h2v2h-2zM152 24h2v2h-2zM0 26h2v2h-2zM2 26h2v2h-2zM4 26h2v2h-2zM12 26h2v2h-2zM14 26h2v2h-2zM18 26h2v2h-2zM26 26h2v2h-2zM46 26h2v2h-2zM52 26h2v2h-2zM104 26h2v2h-2zM120 26h2v2h-2zM124 26h2v2h-2zM142 26h2v2h-2zM166 26h2v2h-2zM0 28h2v2h-2zM6 28h2v2h-2zM12 28h2v2h-2zM38 28h2v2h-2zM56 28h2v2h-2zM66 28h2v2h-2zM76 28h2v2h-2zM88 28h2v2h-2zM126 28h2v2h-2zM128 28h2v2h-2zM134 28h2v2h-2zM148 28h2v2h-2zM152 28h2v2h-2zM172 28h2v2h-2zM0 30h2v2h-2zM6 30h2v2h-2zM8 30h2v2h-2zM10 30h2v2h-2zM12 30h2v2h-2zM18 30h2v2h-2zM48 30h2v2h-2zM66 30h2v2h-2zM68 30h2v2h-2zM86 30h2v2h-2zM122 30h2v2h-2zM126 30h2v2h-2zM132 30h2v2h-2zM138 30h2v2h-2zM144 30h2v2h-2zM148 30h2v2h-2zM158 30h2v2h-2zM164 30h2v2h-2zM166 30h2v2h-2zM14 32h2v2h-2zM38 32h2v2h-2zM44 32h2v2h-2zM68 32h2v2h-2zM88 32h2v2h-2zM96 32h2v2h-2zM126 32h2v2h-2zM140 32h2v2h-2zM148 32h2v2h-2zM162 32h2v2h-2zM0 34h2v2h-2zM10 34h2v2h-2zM14 34h2v2h-2zM18 34h2v2h-2zM58 34h2v2h-2zM72 34h2v2h-2zM88 34h2v2h-2zM90 34h2v2h-2zM96 34h2v2h-2zM138 34h2v2h-2zM158 34h2v2h-2zM162 34h2v2h-2zM168 34h2v2h-2zM6 36h2v2h-2zM36 36h2v2h-2zM88 36h2v2h-2zM90 36h2v2h-2zM94 36h2v2h-2zM120 36h2v2h-2zM156 36h2v2h-2zM158 36h2v2h-2zM164 36h2v2h-2zM168 36h2v2h-2zM170 36h2v2h-2zM16 38h2v2h-2zM94 38h2v2h-2zM96 38h2v2h-2zM150 38h2v2h-2zM160 38h2v2h-2zM168 38h2v2h-2zM172 38h2v2h-2zM0 40h2v2h-2zM10 40h2v2h-2zM12 40h2v2h-2zM16 40h2v2h-2zM82 40h2v2h-2zM88 40h2v2h-2zM90 40h2v2h-2zM94 40h2v2h-2zM98 40h2v2h-2zM100 40h2v2h-2zM134 40h2v2h-2zM152 40h2v2h-2zM158 40h2v2h-2zM164 40h2v2h-2zM166 40h2v2h-2zM168 40h2v2h-2zM2 42h2v2h-2zM104 42h2v2h-2zM130 42h2v2h-2zM134 42h2v2h-2zM136 42h2v2h-2zM138 42h2v2h-2zM140 42h2v2h-2zM152 42h2v2h-2zM162 42h2v2h-2zM2 44h2v2h-2zM44 44h2v2h-2zM86 44h2v2h-2zM94 44h2v2h-2zM96 44h2v2h-2zM98 44h2v2h-2zM100 44h2v2h-2zM102 44h2v2h-2zM134 44h2v2h-2zM138 44h2v2h-2zM140 44h2v2h-2zM144 44h2v2h-2zM152 44h2v2h-2zM160 44h2v2h-2zM40 46h2v2h-2zM64 46h2v2h-2zM90 46h2v2h-2zM94 46h2v2h-2zM96 46h2v2h-2zM130 46h2v2h-2zM132 46h2v2h-2zM134 46h2v2h-2zM138 46h2v2h-2zM140 46h2v2h-2zM142 46h2v2h-2zM148 46h2v2h-2zM158 46h2v2h-2zM42 48h2v2h-2zM48 48h2v2h-2zM86 48h2v2h-2zM90 48h2v2h-2zM96 48h2v2h-2zM98 48h2v2h-2zM124 48h2v2h-2zM130 48h2v2h-2zM134 48h2v2h-2zM136 48h2v2h-2zM138 48h2v2h-2zM156 48h2v2h-2zM170 48h2v2h-2zM36 50h2v2h-2zM46 50h2v2h-2zM88 50h2v2h-2zM94 50h2v2h-2zM132 50h2v2h-2zM142 50h2v2h-2zM156 50h2v2h-2zM16 52h2v2h-2zM42 52h2v2h-2zM44 52h2v2h-2zM48 52h2v2h-2zM52 52h2v2h-2zM82 52h2v2h-2zM92 52h2v2h-2zM94 52h2v2h-2zM8 54h2v2h-2zM34 54h2v2h-2zM36 54h2v2h-2zM38 54h2v2h-2zM86 54h2v2h-2zM128 54h2v2h-2zM132 54h2v2h-2zM136 54h2v2h-2zM140 54h2v2h-2zM14 56h2v2h-2zM44 56h2v2h-2zM48 56h2v2h-2zM50 56h2v2h-2zM136 56h2v2h-2zM142 56h2v2h-2zM36 58h2v2h-2zM42 58h2v2h-2zM46 58h2v2h-2zM50 58h2v2h-2zM130 58h2v2h-2zM140 58h2v2h-2zM150 58h2v2h-2zM166 58h2v2h-2zM168 58h2v2h-2zM50 60h2v2h-2zM74 60h2v2h-2zM82 60h2v2h-2zM140 60h2v2h-2zM28 62h2v2h-2zM36 62h2v2h-2zM44 62h2v2h-2zM70 62h2v2h-2zM72 62h2v2h-2zM102 62h2v2h-2zM4 64h2v2h-2zM68 64h2v2h-2zM74 64h2v2h-2zM142 64h2v2h-2zM170 64h2v2h-2zM4 66h2v2h-2zM60 66h2v2h-2zM62 66h2v2h-2zM160 66h2v2h-2zM168 66h2v2h-2zM14 68h2v2h-2zM50 68h2v2h-2zM52 68h2v2h-2zM60 68h2v2h-2zM66 68h2v2h-2zM72 68h2v2h-2zM130 68h2v2h-2zM154 68h2v2h-2zM158 68h2v2h-2zM160 68h2v2h-2zM164 68h2v2h-2zM168 68h2v2h-2zM12 70h2v2h-2zM34 70h2v2h-2zM60 70h2v2h-2zM62 70h2v2h-2zM66 70h2v2h-2zM154 70h2v2h-2zM164 70h2v2h-2zM170 70h2v2h-2zM34 72h2v2h-2zM58 72h2v2h-2zM64 72h2v2h-2zM68 72h2v2h-2zM154 72h2v2h-2zM168 72h2v2h-2zM170 72h2v2h-2zM58 74h2v2h-2zM60 74h2v2h-2zM62 74h2v2h-2zM64 74h2v2h-2zM80 74h2v2h-2zM130 74h2v2h-2zM156 74h2v2h-2zM158 74h2v2h-2zM168 74h2v2h-2zM4 76h2v2h-2zM14 76h2v2h-2zM16 76h2v2h-2zM64 76h2v2h-2zM66 76h2v2h-2zM82 76h2v2h-2zM144 76h2v2h-2zM146 76h2v2h-2zM152 76h2v2h-2zM154 76h2v2h-2zM158 76h2v2h-2zM160 76h2v2h-2zM162 76h2v2h-2zM166 76h2v2h-2zM170 76h2v2h-2zM0 78h2v2h-2zM2 78h2v2h-2zM48 78h2v2h-2zM54 78h2v2h-2zM60 78h2v2h-2zM66 78h2v2h-2zM146 78h2v2h-2zM152 78h2v2h-2zM154 78h2v2h-2zM170 78h2v2h-2zM2 80h2v2h-2zM8 80h2v2h-2zM14 80h2v2h-2zM64 80h2v2h-2zM102 80h2v2h-2zM132 80h2v2h-2zM134 80h2v2h-2zM152 80h2v2h-2zM154 80h2v2h-2zM156 80h2v2h-2zM160 80h2v2h-2zM0 82h2v2h-2zM6 82h2v2h-2zM26 82h2v2h-2zM48 82h2v2h-2zM64 82h2v2h-2zM128 82h2v2h-2zM144 82h2v2h-2zM0 84h2v2h-2zM2 84h2v2h-2zM6 84h2v2h-2zM10 84h2v2h-2zM38 84h2v2h-2zM138 84h2v2h-2zM0 86h2v2h-2zM4 86h2v2h-2zM6 86h2v2h-2zM8 86h2v2h-2zM10 86h2v2h-2zM58 86h2v2h-2zM60 86h2v2h-2zM92 86h2v2h-2zM106 86h2v2h-2zM122 86h2v2h-2zM136 86h2v2h-2zM144 86h2v2h-2zM170 86h2v2h-2z"/>
<rect x="0" y="0" width="172" height="86" fill="url(#dth)" opacity="0.4"/>
<rect x="0" y="85" width="172" height="35" fill="#808000"/>
<rect x="0" y="84.5" width="172" height="1" fill="#202000"/>
<!-- shadows -->
<path d="M22 85 L58 85 L78 113 L64 113z" fill="url(#dth2)"/>
<path d="M90 85 L104 85 L110 106 L100 106z" fill="url(#dth2)"/>
<!-- glass -->
<path d="M61 8 Q76 4 92 8 L91 20 L84 97 L71 97 L62 20z" fill="#ffff00" stroke="#000" stroke-width="1.6"/>
<path d="M62 8 Q76 5 91 8 L91 18 L62 18z" fill="#fff" stroke="#000" stroke-width="1.2"/>
<rect x="70" y="97" width="15" height="13" fill="#a0a0a0" stroke="#000" stroke-width="1"/>
<ellipse cx="77" cy="111" rx="15" ry="3.5" fill="#808080" stroke="#000" stroke-width="1"/>
<g fill="#a08000"><rect x="67" y="25" width="1" height="1"/><rect x="75" y="32" width="1" height="1"/><rect x="82" y="28" width="1" height="1"/><rect x="70" y="45" width="1" height="1"/><rect x="79" y="52" width="1" height="1"/><rect x="73" y="66" width="1" height="1"/><rect x="84" y="60" width="1" height="1"/><rect x="76" y="80" width="1" height="1"/><rect x="81" y="74" width="1" height="1"/><rect x="68" y="38" width="1" height="1"/></g>
<!-- bottle -->
<path d="M110 8 H122 V36 Q130 44 131 58 V105 Q120 109 104 105 V58 Q105 44 110 36z" fill="#008000" stroke="#000" stroke-width="1.5"/>
<rect x="110.5" y="13" width="11" height="12" fill="#c8c8c8"/>
<path d="M110.5 25 H121.5 V34 Q116 37 110.5 34z" fill="#e8e8e8"/><path d="M112 26 H120 L118 33 L116 35 L114 33z" fill="#202020"/><g fill="#fff"><rect x="113" y="27" width="1" height="1"/><rect x="117" y="27" width="1" height="1"/><rect x="115" y="29" width="1" height="1"/><rect x="113" y="30" width="1" height="1"/><rect x="118" y="30" width="1" height="1"/></g>
<path d="M104.5 62 H130.5 V104 Q120 107 104.5 104z" fill="#e0dcec" stroke="#000" stroke-width="0.8"/>
<path d="M104.5 62 H110 V104 H104.5z" fill="url(#dthg)"/>
<path d="M108 63 H129 L118 78z" fill="#c070c0"/><path d="M115 70 L121 68 L118 74z" fill="#804020"/>
<path d="M109 63 H128 L118 68z" fill="#6060e0"/>
<text x="106" y="91" font-family="Liberation Sans" font-weight="bold" font-size="11" fill="#8020a0">b86</text>
<path d="M108 93.5 H128" stroke="#4040c0" stroke-width="1.5"/>
<circle cx="118" cy="98" r="2.5" fill="none" stroke="#4040c0" stroke-width="1"/>
<path d="M124 44 Q127 52 128 60" stroke="#fff" stroke-width="0.8" fill="none"/>
</g></svg>
<svg style="left:764px;top:236px" width="172" height="120" viewBox="0 0 172 120">
<rect x="0" y="0" width="172" height="120" fill="#ff0000"/>
<rect x="0" y="63" width="172" height="8" fill="#fff"/>
<path fill="#000" d="M0 63h4v4h-4zM8 63h4v4h-4zM16 63h4v4h-4zM24 63h4v4h-4zM32 63h4v4h-4zM40 63h4v4h-4zM48 63h4v4h-4zM56 63h4v4h-4zM64 63h4v4h-4zM72 63h4v4h-4zM80 63h4v4h-4zM88 63h4v4h-4zM96 63h4v4h-4zM104 63h4v4h-4zM112 63h4v4h-4zM120 63h4v4h-4zM128 63h4v4h-4zM136 63h4v4h-4zM144 63h4v4h-4zM152 63h4v4h-4zM160 63h4v4h-4zM168 63h4v4h-4zM4 67h4v4h-4zM12 67h4v4h-4zM20 67h4v4h-4zM28 67h4v4h-4zM36 67h4v4h-4zM44 67h4v4h-4zM52 67h4v4h-4zM60 67h4v4h-4zM68 67h4v4h-4zM76 67h4v4h-4zM84 67h4v4h-4zM92 67h4v4h-4zM100 67h4v4h-4zM108 67h4v4h-4zM116 67h4v4h-4zM124 67h4v4h-4zM132 67h4v4h-4zM140 67h4v4h-4zM148 67h4v4h-4zM156 67h4v4h-4zM164 67h4v4h-4zM172 67h4v4h-4z"/>
<rect x="0" y="71" width="172" height="49" fill="#808080"/>
<!-- tent card left -->
<path d="M14 57 L66 57 L70 100 L6 100z" fill="#fff8a0" stroke="#000" stroke-width="1.5"/>
<path d="M14 57 L6 100 L18 100z" fill="#a0a040" stroke="#000" stroke-width="1"/>
<path d="M20 62 L64 62 L66 96 L24 96z" fill="#008040" stroke="#000" stroke-width="1"/>
<path d="M24 66 L63 66 L64 92 L27 92z" fill="#ffff99"/>
<text x="27" y="85" font-family="Liberation Serif" font-weight="bold" font-size="27" fill="#000080">FR</text>
<rect x="28" y="88" width="30" height="2" fill="#c03000"/>
<!-- tent card right -->
<path d="M110 55 L122 55 L130 90 L112 90z" fill="#ffff99" stroke="#000" stroke-width="1.2"/>
<path d="M116 57 L124 88" stroke="#008040" stroke-width="2"/>
<!-- jar -->
<path d="M64 18 Q58 30 58 60 Q58 92 68 113 Q86 117 104 113 Q114 92 114 60 Q114 30 107 18z" fill="#8c8c10" stroke="#000" stroke-width="1.8"/>
<path d="M62 7 Q85 3 108 7 L108 17 Q85 20 62 17z" fill="#c8c8c8" stroke="#000" stroke-width="1.6"/>
<path d="M92 8 l1 8 M95 8 l1 8 M98 7 l1 9 M101 7 l1 9 M104 8 l1 8" stroke="#404040" stroke-width="1"/>
<rect x="65" y="29" width="43" height="43" rx="4" fill="#109090" stroke="#000" stroke-width="1.5"/>
<path d="M73 38 Q69 48 72 60 M79 44 V54 M84 40 Q90 44 84 52 Q84 60 90 58 M96 40 V60 M100 42 Q103 50 100 58" fill="none" stroke="#000" stroke-width="1.4"/><path d="M76 65 H102 M80 68 H104" stroke="#000" stroke-width="0.8" stroke-dasharray="2 1"/>
<ellipse cx="89" cy="92" rx="9.5" ry="13" fill="#b01818" stroke="#000" stroke-width="1.5"/><path d="M84 86 Q89 82 94 86 M83 96 Q89 102 95 96 M86 90 l6 4" stroke="#e03030" stroke-width="1" fill="none"/>
<circle cx="89" cy="92" r="2" fill="#000"/>
<!-- tin -->
<path d="M107 88 Q140 80 172 88 V112 Q140 120 107 112z" fill="#109090" stroke="#000" stroke-width="1.5"/>
<ellipse cx="140" cy="88" rx="32" ry="6" fill="#c8c8c8" stroke="#000" stroke-width="1.5"/>
<ellipse cx="140" cy="89" rx="27" ry="3.5" fill="#e0e0e0"/>
<path d="M107 95 Q140 88 172 95" stroke="#c040c0" stroke-width="1.5" fill="none"/>
<path d="M107 114 Q140 122 172 114" stroke="#c040c0" stroke-width="1.5" fill="none"/>
<ellipse cx="124" cy="104" rx="17" ry="8" fill="#0000c0" stroke="#000" stroke-width="1"/>
<text x="111" y="108" font-family="Liberation Sans" font-weight="bold" font-size="10" fill="#fff">PaLLz</text>
<path d="M145 100 H166 M145 104 H166 M145 108 H164" stroke="#000" stroke-width="0.8"/>
</svg>
<svg style="left:764px;top:357px" width="172" height="120" viewBox="0 0 172 120">
<defs><pattern id="dthy" width="2" height="2" patternUnits="userSpaceOnUse"><rect width="2" height="2" fill="#ffffc0"/><rect x="1" y="0" width="1" height="1" fill="#f0f080"/><rect x="0" y="1" width="1" height="1" fill="#fff"/></pattern></defs>
<rect x="0" y="0" width="172" height="120" fill="#0000ff"/>
<rect x="0" y="80" width="172" height="40" fill="#800000"/>
<ellipse cx="84" cy="76" rx="102" ry="46" fill="#800080" stroke="#000" stroke-width="1.5"/>
<ellipse cx="83" cy="87" rx="68" ry="45" fill="#c0c0c0" stroke="#000" stroke-width="1.5"/>
<!-- right piece -->
<path d="M100 26 L113 12 L138 23 L143 71 L114 80 L112 42z" fill="url(#dthy)" stroke="#000" stroke-width="1.5"/>
<path d="M113 12 L138 23 L143 71 L139 72 L134 27 L112 16z" fill="#a09060" stroke="#000" stroke-width="1"/>
<path d="M112 43 L134 36" stroke="#ffff00" stroke-width="3.5"/>
<!-- left piece -->
<path d="M31 49 L64 42 L64 97 L38 97z" fill="url(#dthy)" stroke="#000" stroke-width="1.5"/>
<path d="M31 49 L64 42 L64 47 L32 54z" fill="#ffff00" stroke="#000" stroke-width="0.8"/>
<!-- sauce -->
<path d="M57 36 L70 30 L88 26 L114 32 L116 38 L114 46 L114 75 L120 80 L120 98 L104 100 L80 101 L64 99 L64 43z" fill="#ff1010" stroke="#000" stroke-width="1.2"/>
<path d="M68 40 q4 -3 8 0 M92 34 q4 -3 8 0 M72 90 q4 -3 8 0 M96 92 q4 -3 8 0 M104 84 q4 -3 8 0" stroke="#c00000" stroke-width="1" fill="none"/>
<path d="M78 51 L81 43 L97 41 L101 44 L104 78 L80 83z" fill="url(#dthy)" stroke="#000" stroke-width="1.2"/>
<path d="M23 74 Q34 66 38 76 L36 92 Q26 90 22 82z" fill="#ff1010" stroke="#000" stroke-width="1"/>
</svg>
</div><div class="a" style="left:225px;top:81px;width:752px;height:377px;overflow:hidden">
<div class="a" style="left:735px;top:0px;width:17px;height:377px;background:#f0f0f0"></div>
<div class="a" style="left:736px;top:17px;width:15px;height:119px;background:#cdcdcd"></div>
<svg style="left:739px;top:5px" width="9" height="8"><path d="M1 5.5 L4.5 2 L8 5.5" fill="none" stroke="#606060" stroke-width="2.2"/></svg>
<svg style="left:739px;top:365px" width="9" height="8"><path d="M1 2 L4.5 5.5 L8 2" fill="none" stroke="#606060" stroke-width="2.2"/></svg>
</div>
<div class="a" style="left:216px;top:470px;width:768px;height:200px;background:#ffffc0"></div>
<div class="t" style="left:231px;top:480px;">SQL</div>
<div class="a" style="left:231px;top:495px;width:624px;height:60px;border:1px solid #646464;background:#fff"></div>
<div class="t" style="left:231px;top:571px;">Records: 8</div>
<div class="t" style="left:392px;top:571px;">Table: Categories</div>
<div class="t" style="left:231px;top:595px;">Select a Table, or enter a SQL statement</div>
<div class="a" style="left:869px;top:490px;width:103px;height:37px;border:2px solid #c6c6c0;background:#efeff0"></div>
<div class="t" style="left:869px;top:502px;width:103px;text-align:center;color:#555;letter-spacing:-0.3px">Run SQL (f9)</div>
<div class="a" style="left:869px;top:545px;width:103px;height:37px;border:2px solid #c6c6c0;background:#efeff0"></div>
<div class="t" style="left:869px;top:558px;width:103px;text-align:center;color:#555;letter-spacing:0px">Clear SQL</div>
<div class="a" style="left:232px;top:618px;width:151px;height:38px;border:2px solid #c6c6c0;background:#efeff0"></div>
<div class="t" style="left:232px;top:631px;width:151px;text-align:center;color:#555;letter-spacing:0.3px">Update</div>
<div class="a" style="left:394px;top:618px;width:151px;height:38px;border:2px solid #c6c6c0;background:#efeff0"></div>
<div class="t" style="left:394px;top:631px;width:151px;text-align:center;color:#555;letter-spacing:0px">Cancel</div>
<div class="a" style="left:0px;top:670px;width:986px;height:22px;background:#f0f0f0"></div>
<div class="a" style="left:2px;top:673px;width:834px;height:19px;border-left:1px solid #6e6e6e;border-top:1px solid #6e6e6e"></div>
<div class="t" style="left:5px;top:676px;letter-spacing:0.12px">C:\Users\User\Documents\My Databases\Northwind40.sdf</div>
<div class="a" style="left:837px;top:673px;width:1px;height:19px;background:#8a8a8a"></div>
<svg style="left:842px;top:672px" width="16" height="17">
<path d="M1.2 5.5 Q1.2 1.5 4.5 1.5 Q7.8 1.5 7.8 6" fill="none" stroke="#000" stroke-width="1.5"/>
<rect x="2.5" y="6.5" width="11" height="9" fill="#f0f078" stroke="#606000" stroke-width="1"/>
<path d="M13.5 6 V16 H2" fill="none" stroke="#000" stroke-width="1.6"/>
<path d="M4 10 h8 M4 12 h8" stroke="#8c8c00" stroke-width="1.1"/>
</svg>
<div class="t" style="left:860px;top:676px;">Version 4.0</div>
<div class="a" style="left:920px;top:673px;width:49px;height:19px;border-left:1px solid #8a8a8a;border-top:1px solid #8a8a8a"></div>
<div class="t" style="left:925px;top:676px;">1,52 MB</div>
<svg style="left:970px;top:676px" width="14" height="16">
<g fill="#a0a0a0"><rect x="9" y="3" width="2" height="2"/><rect x="6" y="6" width="2" height="2"/><rect x="9" y="6" width="2" height="2"/><rect x="3" y="9" width="2" height="2"/><rect x="6" y="9" width="2" height="2"/><rect x="9" y="9" width="2" height="2"/></g>
</svg>
<div class="a" style="left:0px;top:0px;width:1px;height:692px;background:#27465f"></div>
<div class="a" style="left:1px;top:31px;width:1px;height:661px;background:#6a8294"></div>
<div class="a" style="left:0px;top:0px;width:986px;height:1px;background:#2b4b66"></div>
<div class="a" style="left:985px;top:0px;width:1px;height:692px;background:#283a4a"></div>
</body></html>
